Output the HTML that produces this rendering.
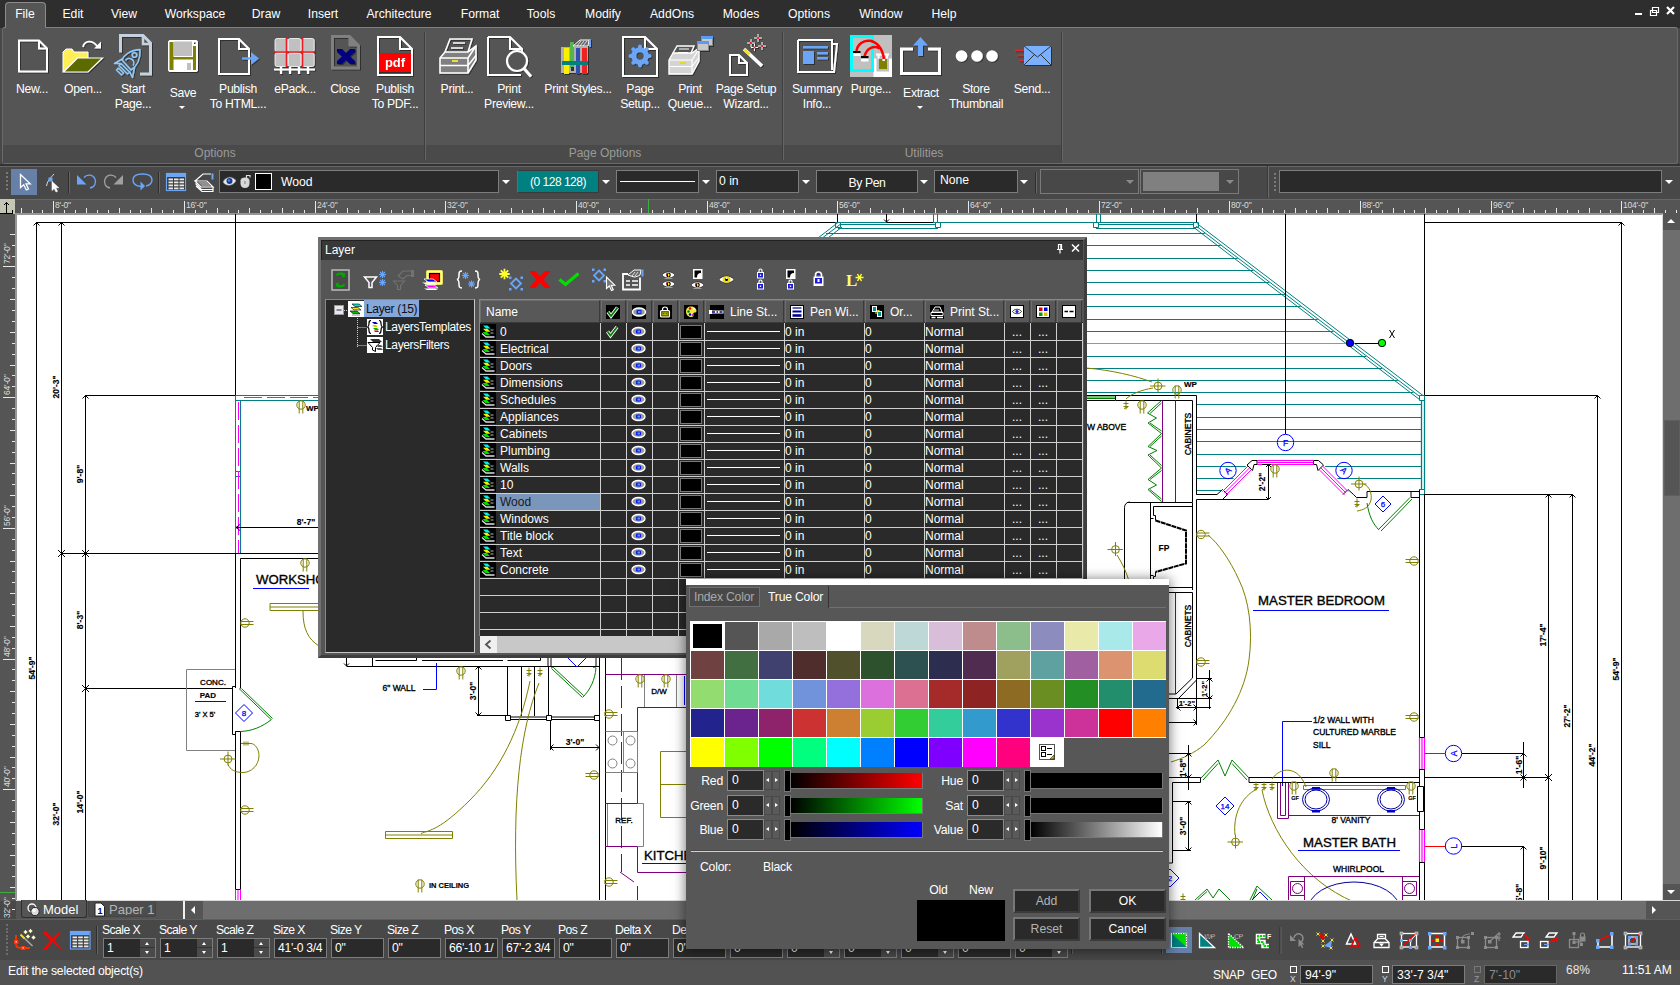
<!DOCTYPE html>
<html lang="en">
<head>
<meta charset="utf-8">
<title>TurboCAD - Layer</title>
<style>
*{box-sizing:border-box;margin:0;padding:0}
html,body{width:1680px;height:985px;overflow:hidden;background:#484848;}
body{font-family:"Liberation Sans",sans-serif;font-size:12px;color:#fff;position:relative;}
.abs{position:absolute}
.t{position:absolute;white-space:nowrap;line-height:14px;}
.c{transform:translateX(-50%);text-align:center}
svg{position:absolute;overflow:visible}
/* menu */
#menubar{position:absolute;left:0;top:0;width:1680px;height:28px;background:#2e2e2e}
#menubar .t{top:7px;font-size:12.2px;color:#fff}
#filetab{position:absolute;left:5px;top:2px;width:41px;height:27px;background:#555;border:1px solid #8c8c8c;border-bottom:none;border-radius:4px 4px 0 0}
/* ribbon */
#ribbon{position:absolute;left:2px;top:27px;width:1676px;height:137px;background:#555;border:1px solid #6a6a6a;border-top-color:#808080;border-radius:3px}
#ribfoot{position:absolute;left:3px;top:145px;width:1059px;height:18px;background:#4a4a4a}
.rl{position:absolute;white-space:nowrap;letter-spacing:-.3px;font-size:12.2px;line-height:15px;color:#fff;text-align:center;transform:translateX(-50%)}
.gl{position:absolute;white-space:nowrap;font-size:12px;line-height:14px;color:#9a9a9a;transform:translateX(-50%);top:146px}
.rsep{position:absolute;top:32px;width:2px;height:128px;background:#3e3e3e;border-right:1px solid #666}
/* toolbar */
#tb{position:absolute;left:0;top:166px;width:1680px;height:32px;background:#484848;border-top:1px solid #666}
.cb{position:absolute;top:170px;height:23px;background:#2a2a2a;border:1px solid #7d7d7d}
.arr{position:absolute;width:0;height:0;border-left:4px solid transparent;border-right:4px solid transparent;border-top:4px solid #fff}
/* ruler */
#hruler{position:absolute;left:0;top:199px;width:1680px;height:15px;background:#555;border-top:1px solid #676767}
#vruler{position:absolute;left:0;top:199px;width:16px;height:702px;background:#555}
#canvas{position:absolute;left:17px;top:215px;width:1646px;height:685px;background:#fff;overflow:hidden}
</style>
</head>
<body>
<!-- ===== MENU BAR ===== -->
<div id="menubar">
<div id="filetab"></div>
<div class="t c" style="left:25px">File</div>
<div class="t c" style="left:73px">Edit</div>
<div class="t c" style="left:124px">View</div>
<div class="t c" style="left:195px">Workspace</div>
<div class="t c" style="left:266px">Draw</div>
<div class="t c" style="left:323px">Insert</div>
<div class="t c" style="left:399px">Architecture</div>
<div class="t c" style="left:480px">Format</div>
<div class="t c" style="left:541px">Tools</div>
<div class="t c" style="left:603px">Modify</div>
<div class="t c" style="left:672px">AddOns</div>
<div class="t c" style="left:741px">Modes</div>
<div class="t c" style="left:809px">Options</div>
<div class="t c" style="left:881px">Window</div>
<div class="t c" style="left:944px">Help</div>
<svg style="left:1630px;top:4px" width="50" height="16" viewBox="0 0 50 16">
<rect x="5" y="9" width="7" height="2" fill="#fff"/>
<path d="M22.5 3.5h6v5h-6z M20.500 6.500h6v5h-6z" fill="#2d2d2d" stroke="#fff" stroke-width="1.2"/>
<path d="M37 3l7 7M44 3l-7 7" stroke="#fff" stroke-width="2.2"/>
</svg>
</div>
<!-- ===== RIBBON ===== -->
<div id="ribbon"></div>
<div id="ribfoot"></div>
<div class="abs" style="left:6px;top:27px;width:39px;height:3px;background:#555"></div>
<div class="rsep" style="left:424px"></div>
<div class="rsep" style="left:782px"></div>
<div class="rsep" style="left:1061px"></div>
<div class="gl" style="left:215px">Options</div>
<div class="gl" style="left:605px">Page Options</div>
<div class="gl" style="left:924px">Utilities</div>
<div class="rl" style="left:32px;top:82px">New...</div>
<div class="rl" style="left:83px;top:82px">Open...</div>
<div class="rl" style="left:133px;top:82px">Start<br>Page...</div>
<div class="rl" style="left:183px;top:86px">Save</div>
<div class="arr" style="left:179px;top:106px;border-width:3px 3px 0 3px"></div>
<div class="rl" style="left:238px;top:82px">Publish<br>To HTML...</div>
<div class="rl" style="left:295px;top:82px">ePack...</div>
<div class="rl" style="left:345px;top:82px">Close</div>
<div class="rl" style="left:395px;top:82px">Publish<br>To PDF...</div>
<div class="rl" style="left:457px;top:82px">Print...</div>
<div class="rl" style="left:509px;top:82px">Print<br>Preview...</div>
<div class="rl" style="left:578px;top:82px">Print Styles...</div>
<div class="rl" style="left:640px;top:82px">Page<br>Setup...</div>
<div class="rl" style="left:690px;top:82px">Print<br>Queue...</div>
<div class="rl" style="left:746px;top:82px">Page Setup<br>Wizard...</div>
<div class="rl" style="left:817px;top:82px">Summary<br>Info...</div>
<div class="rl" style="left:871px;top:82px">Purge...</div>
<div class="rl" style="left:921px;top:86px">Extract</div>
<div class="arr" style="left:917px;top:106px;border-width:3px 3px 0 3px"></div>
<div class="rl" style="left:976px;top:82px">Store<br>Thumbnail</div>
<div class="rl" style="left:1032px;top:82px">Send...</div>
<!--RIB_START-->
<svg style="left:0;top:0" width="1680" height="165" viewBox="0 0 1680 165" fill="none" stroke-linejoin="miter">
<defs><filter id="sh" x="-10%" y="-10%" width="130%" height="130%"><feDropShadow dx="1" dy="1" stdDeviation=".6" flood-color="#000" flood-opacity=".45"/></filter></defs>
<g filter="url(#sh)">
<path d="M19 40.500h20l8 8v23h-28z" stroke="#fff" stroke-width="2"/><path d="M39 40.500v8h8" stroke="#fff" stroke-width="2"/>
<path d="M63 72v-20l3-3h6l2 3h14v6h-11z" fill="#ffee58" stroke="#fff" stroke-width="1"/>
<path d="M63.500 72l14-14h25l-14.500 14z" fill="#5d6b00" stroke="#fff" stroke-width="1.200"/>
<path d="M83 47c1-6 9-8 14-1" stroke="#fff" stroke-width="1.800"/><path d="M94 48.500l7 0l0-7z" fill="#fff"/>
<path d="M120.500 52.500v-17h22.500l7.500 7.500v31h-10.500" stroke="#c4d2e0" stroke-width="3"/><path d="M143 36v8h8" stroke="#c4d2e0" stroke-width="2.500"/>
<g stroke="#90c8f8" stroke-width="1.600" stroke-linejoin="round"><path d="M140 49.600C130 50 124 55 122 60L131 70C136.500 66.500 140.500 60 140 49.600z"/><circle cx="134.500" cy="55" r="2.300"/><path d="M125.500 60.500a4.500 4.500 0 0 1 7.500 5"/><path d="M123 58.500L114.500 63.500L120.500 63.500"/><path d="M134.500 67.500L132.500 77.500L129.500 71.500"/><path d="M121 63.500l8.500 8.500l-2 2l-8.500-8.500zM118.500 68l5 5l-2 2l-5-5z"/></g>
<rect x="168.500" y="40.500" width="29" height="31" rx="1.500" fill="#fff" stroke="#fff"/><rect x="169.500" y="42" width="4" height="28" fill="#808000"/><rect x="193" y="46" width="3" height="24" fill="#808000"/><rect x="174" y="41.500" width="18" height="14.500" fill="#c0c0c0"/><rect x="173" y="57" width="20" height="2.500" fill="#808000"/><rect x="187" y="63" width="4" height="7" fill="#c0c0c0"/><rect x="194" y="42.500" width="1.500" height="1.500" fill="#333"/>
<path d="M219 39h20l10 10v25h-30z" stroke="#fff" stroke-width="2"/><path d="M239 39v10h10" stroke="#fff" stroke-width="2"/><path d="M242 58.500h9" stroke="#6aa5f8" stroke-width="2.400"/><path d="M251 52l8 6.500l-8 6.500z" fill="#6aa5f8"/>
<rect x="275.0" y="38.5" width="12.600" height="13.500" rx="2" fill="#c0c0c0" stroke="#fff" stroke-width=".8"/>
<rect x="288.3" y="38.5" width="12.600" height="13.500" rx="2" fill="#c0c0c0" stroke="#fff" stroke-width=".8"/>
<rect x="301.6" y="38.5" width="12.600" height="13.500" rx="2" fill="#c0c0c0" stroke="#fff" stroke-width=".8"/>
<rect x="275.0" y="53.0" width="12.600" height="13.500" rx="2" fill="#c0c0c0" stroke="#fff" stroke-width=".8"/>
<rect x="288.3" y="53.0" width="12.600" height="13.500" rx="2" fill="#c0c0c0" stroke="#fff" stroke-width=".8"/>
<rect x="301.6" y="53.0" width="12.600" height="13.500" rx="2" fill="#c0c0c0" stroke="#fff" stroke-width=".8"/>
<path d="M274 52h41M286.500 38v29M302.500 38v29" stroke="#ee1c24" stroke-width="1.600"/>
<path d="M274 69.500h41M281 67v7M290 67v7M299 67v7M308 67v7" stroke="#fff" stroke-width="2.200"/>
<path d="M332.500 36.500h17l9 9v22.500h-26z" stroke="#808080" stroke-width="3"/><path d="M349 36v10h10" fill="#808080" stroke="#808080"/>
<path d="M337 49h5l4 4l4-4h5v3l-5 4.500l5 4.500v3h-5l-4-4l-4 4h-5v-3l5-4.500l-5-4.500z" fill="#000080"/>
<path d="M378 37h22l12 12v26h-34z" stroke="#fff" stroke-width="2"/><path d="M400 37v12h12" stroke="#fff" stroke-width="2"/><rect x="379" y="53" width="32" height="19" fill="#ff0000"/>
<text x="395" y="67" font-family="Liberation Sans,sans-serif" font-weight="bold" font-size="13" fill="#fff" stroke="none" text-anchor="middle">pdf</text>
<path d="M445 52l5-13h22l-4 13" stroke="#fff" stroke-width="1.600"/><path d="M453 43h12M451 48h12" stroke="#fff" stroke-width="1.600"/>
<path d="M440 58l5-6h23l8-6v14l-8 13h-28z" fill="#808080" stroke="#fff" stroke-width="1.600"/><path d="M440 58h28v15M468 58l8-12M440 65.500h28l8-10" stroke="#fff" stroke-width="1.600"/><rect x="452" y="60" width="6" height="2" fill="#f0e020"/>
<path d="M488 37h22l12 12v4M510 37v12h12M488 37v38h33" stroke="#fff" stroke-width="2"/><circle cx="517" cy="61" r="10" stroke="#fff" stroke-width="2.200" fill="#555"/><path d="M524 68.500l7 8" stroke="#fff" stroke-width="3"/>
<rect x="561" y="47" width="27" height="26" fill="#b0b0b0"/><rect x="564" y="48" width="5" height="26" fill="#ffee00"/><rect x="570" y="42" width="4" height="26" fill="#50b848"/><rect x="576" y="48" width="4" height="26" fill="#3050b0"/><rect x="582" y="48" width="5" height="26" fill="#ee2020"/><rect x="562" y="61" width="26" height="4" fill="#008080"/><rect x="571" y="67" width="3" height="4" fill="#333"/>
<path d="M573 46l7-6h9l-1 6z" fill="#666" stroke="#fff" stroke-width="1"/><path d="M577 46l4-5M580 46l4-5M583 46l4-5" stroke="#fff" stroke-width=".8"/><rect x="589" y="39" width="2" height="8" fill="#6aa5f8"/>
<path d="M623 37h22l12 12v27h-34z" stroke="#fff" stroke-width="2"/><path d="M645 37v12h12" stroke="#fff" stroke-width="2"/><circle cx="640" cy="56" r="6.2" stroke="#6aa5f8" stroke-width="5.0"/><circle cx="649.5" cy="56.0" r="2.0" fill="#6aa5f8"/><path d="M648.0 56.0L649.5 56.0" stroke="#6aa5f8" stroke-width="4.0"/><circle cx="646.7" cy="62.7" r="2.0" fill="#6aa5f8"/><path d="M645.7 61.7L646.7 62.7" stroke="#6aa5f8" stroke-width="4.0"/><circle cx="640.0" cy="65.5" r="2.0" fill="#6aa5f8"/><path d="M640.0 64.0L640.0 65.5" stroke="#6aa5f8" stroke-width="4.0"/><circle cx="633.3" cy="62.7" r="2.0" fill="#6aa5f8"/><path d="M634.3 61.7L633.3 62.7" stroke="#6aa5f8" stroke-width="4.0"/><circle cx="630.5" cy="56.0" r="2.0" fill="#6aa5f8"/><path d="M632.0 56.0L630.5 56.0" stroke="#6aa5f8" stroke-width="4.0"/><circle cx="633.3" cy="49.3" r="2.0" fill="#6aa5f8"/><path d="M634.3 50.3L633.3 49.3" stroke="#6aa5f8" stroke-width="4.0"/><circle cx="640.0" cy="46.5" r="2.0" fill="#6aa5f8"/><path d="M640.0 48.0L640.0 46.5" stroke="#6aa5f8" stroke-width="4.0"/><circle cx="646.7" cy="49.3" r="2.0" fill="#6aa5f8"/><path d="M645.7 50.3L646.7 49.3" stroke="#6aa5f8" stroke-width="4.0"/>
<path d="M673 53l4-7h17l-3 7" stroke="#fff" stroke-width="1.400" fill="#555"/><path d="M679 49h10M678 52.500h10" stroke="#fff" stroke-width="1.200"/>
<path d="M669 60l4-7h19l7-5v13l-7 13h-23z" fill="#d4d4d4" stroke="#fff" stroke-width="1.400"/><path d="M669 60h23v14M692 60l7-11M669 66.500h23l7-9" stroke="#fff" stroke-width="1.200"/><rect x="680" y="62" width="6" height="2" fill="#e8d820"/>
<rect x="701.500" y="36.500" width="11" height="9" fill="#c8c8c8" stroke="#888"/><rect x="701" y="36" width="12" height="3" fill="#5a9af0"/><rect x="697.500" y="41.500" width="11" height="9" fill="#c8c8c8" stroke="#888"/><rect x="697" y="41" width="12" height="3" fill="#5a9af0"/>
<path d="M730 55h9l8 8v12h-17z" stroke="#fff" stroke-width="2"/><path d="M739 55v8h8" stroke="#fff" stroke-width="2"/>
<path d="M744 49l18 17" stroke="#fff" stroke-width="3.500"/><path d="M744.500 49.500l5 4.800" stroke="#f0e020" stroke-width="2.500"/>
<g stroke="#fff" stroke-width="1"><path d="M747 43h8M751 39v8M754 38h8M758 34v8M751 47.500h7M754.500 44v7M758 46h8M762 42v8"/></g><g fill="#ff2020"><rect x="750" y="42" width="2" height="2"/><rect x="757" y="37" width="2" height="2"/><rect x="753.500" y="46.500" width="2" height="2"/><rect x="761" y="45" width="2" height="2"/></g>
<path d="M798 40h34v30M832 44h5l-3 28h-36v-32" stroke="#fff" stroke-width="2"/><rect x="803" y="46" width="25" height="2.500" fill="#6aa5f8"/><rect x="803" y="51" width="11" height="13" fill="#6aa5f8"/><rect x="817" y="52" width="11" height="2.500" fill="#6aa5f8"/><rect x="817" y="57" width="11" height="2.500" fill="#6aa5f8"/>
</g>
<rect x="850" y="35" width="42" height="42" fill="#c0c0c0"/><rect x="873.500" y="58.500" width="18.500" height="18.500" fill="#fff"/><rect x="851.500" y="36.500" width="21" height="34" stroke="#00ffff" stroke-width="3"/>
<rect x="876.500" y="55" width="12.500" height="16.500" fill="#c0c0c0"/><path d="M876 54.500h13M878.500 55v3.500M887 55v3.500" stroke="#fff" stroke-width="2"/><rect x="879" y="59" width="8" height="10" fill="#808000"/>
<path d="M856.500 51c2-14 24-16 27.500 8M864.500 56.500c2-9 10-11.500 15-8" stroke="#ff0000" stroke-width="2.500"/><rect x="882.500" y="59" width="2.500" height="2" fill="#fff"/>
<rect x="853" y="51" width="7.500" height="2" fill="#000"/><rect x="853" y="53.500" width="7.500" height="2.500" fill="#fff"/><rect x="861" y="56" width="7.500" height="2" fill="#000"/><rect x="861" y="59" width="7.500" height="2.500" fill="#fff"/>
<g filter="url(#sh)">
<path d="M913 49h-11.500v24.500h38v-24.500h-11.500" stroke="#fff" stroke-width="3"/><path d="M920.500 56v-12" stroke="#6aa5f8" stroke-width="5"/><path d="M913 45.500l7.500-8.500l7.500 8.500z" fill="#6aa5f8"/>
<circle cx="961.500" cy="56" r="5.800" fill="#fff"/><circle cx="977" cy="56" r="5.800" fill="#fff"/><circle cx="992" cy="56" r="5.800" fill="#fff"/>
<rect x="1024" y="46" width="27" height="19" fill="#7ab0ff"/><path d="M1024 46l13.500 11l13.500-11M1024 65l10-10M1051 65l-10-10" stroke="#333" stroke-width="1"/><path d="M1015 50.500h9M1017 55.500h7M1019 60.500h5" stroke="#ee2020" stroke-width="1.600"/>
</g>
</svg>
<!--RIB_END-->
<!-- ===== TOOLBAR ===== -->
<div id="tb"></div>
<div class="abs" style="left:0;top:164px;width:1680px;height:2px;background:#333"></div>
<div class="abs" style="left:11px;top:169px;width:26px;height:26px;background:#6680a8"></div>
<div class="abs" style="left:68px;top:172px;width:2px;height:21px;background:#2e2e2e;border-right:1px solid #666"></div>
<div class="abs" style="left:158px;top:172px;width:2px;height:21px;background:#2e2e2e;border-right:1px solid #666"></div>
<div class="cb" style="left:219px;width:280px"></div>
<div class="abs" style="left:255px;top:173px;width:17px;height:17px;background:#000;border:1px solid #fff"></div>
<div class="t" style="left:281px;top:175px;font-size:12.2px">Wood</div>
<div class="arr" style="left:502px;top:180px"></div>
<div class="cb" style="left:517px;width:82px;background:#008080;border-color:#3a3a3a #3a3a3a #3a3a3a #6a6a6a"></div>
<div class="t c" style="left:558px;top:175px;font-size:12px;letter-spacing:-.5px">(0 128 128)</div>
<div class="arr" style="left:602px;top:180px"></div>
<div class="cb" style="left:616px;width:83px"></div>
<div class="abs" style="left:620px;top:181px;width:75px;height:1px;background:#fff"></div>
<div class="arr" style="left:702px;top:180px"></div>
<div class="cb" style="left:716px;width:83px"></div>
<div class="t" style="left:719px;top:174px;font-size:12.2px">0 in</div>
<div class="arr" style="left:802px;top:180px"></div>
<div class="cb" style="left:816px;width:102px"></div>
<div class="t c" style="left:867px;top:176px;font-size:12.2px;letter-spacing:-.4px">By Pen</div>
<div class="arr" style="left:920px;top:180px"></div>
<div class="cb" style="left:934px;width:84px"></div>
<div class="t" style="left:940px;top:173px;font-size:12.2px">None</div>
<div class="arr" style="left:1020px;top:180px"></div>
<div class="abs" style="left:1035px;top:172px;width:2px;height:21px;background:#2e2e2e;border-right:1px solid #666"></div>
<div class="cb" style="left:1040px;top:169px;height:25px;width:99px;background:#484848;border-color:#7a7a7a"></div>
<div class="arr" style="left:1126px;top:180px;border-top-color:#8a8a8a"></div>
<div class="cb" style="left:1140px;top:169px;height:25px;width:99px;background:#484848;border-color:#7a7a7a"></div>
<div class="abs" style="left:1143px;top:172px;width:76px;height:19px;background:#808080"></div>
<div class="arr" style="left:1226px;top:180px;border-top-color:#8a8a8a"></div>
<div class="abs" style="left:1267px;top:166px;width:2px;height:32px;background:#3a3a3a;border-right:1px solid #6a6a6a"></div>
<div class="abs" style="left:1274px;top:173px;width:2px;height:2px;background:#7a7a7a"></div><div class="abs" style="left:1274px;top:177px;width:2px;height:2px;background:#7a7a7a"></div><div class="abs" style="left:1274px;top:181px;width:2px;height:2px;background:#7a7a7a"></div><div class="abs" style="left:1274px;top:185px;width:2px;height:2px;background:#7a7a7a"></div><div class="abs" style="left:1274px;top:189px;width:2px;height:2px;background:#7a7a7a"></div>
<div class="cb" style="left:1279px;width:383px"></div>
<div class="arr" style="left:1665px;top:180px"></div>
<!--TBI_START-->
<svg style="left:0;top:164px" width="300" height="36" viewBox="0 164 300 36" fill="none">
<rect x="6" y="172" width="2" height="2" fill="#7a7a7a"/>
<rect x="6" y="176" width="2" height="2" fill="#7a7a7a"/>
<rect x="6" y="180" width="2" height="2" fill="#7a7a7a"/>
<rect x="6" y="184" width="2" height="2" fill="#7a7a7a"/>
<rect x="6" y="188" width="2" height="2" fill="#7a7a7a"/>
<path d="M20.500 174.500v13l3.200-2.800l2.600 5.300l2.200-1l-2.500-5.200h4.200z" fill="#6680a8" stroke="#fff" stroke-width="1.300" stroke-linejoin="miter"/>
<path d="M46.500 186c1-6 5-9 7.500-12" stroke="#ddd" stroke-width="1"/><rect x="48.500" y="177.500" width="4" height="4" fill="#6aa5f8"/><path d="M52 181.500v9l2.200-2l1.800 3.500l1.500-.7l-1.700-3.500h3z" fill="#fff" stroke="#fff" stroke-width=".6"/>
<path d="M77 175v9.500h9.500z" fill="#6aa5f8"/><path d="M84 177.500a6.500 6.500 0 1 1 6 10.500" stroke="#6aa5f8" stroke-width="1.300"/>
<path d="M123 175v9.500h-9.500z" fill="#a0a0a0"/><path d="M116 177.500a6.500 6.500 0 1 0 -6 10.500" stroke="#a0a0a0" stroke-width="1.300"/>
<path d="M141 186.500c-5-.5-8-3-8-6.500c0-4 4-6 9.500-6s9.500 2 9.500 6c0 3-2 5-6 6" stroke="#6aa5f8" stroke-width="1.400"/><path d="M140.500 181.500l4.500 4.500l-4.500 4.500z" fill="#6aa5f8"/>
<rect x="166.500" y="173.500" width="19" height="17" fill="#3a3a3a" stroke="#6aa5f8" stroke-width="1.200"/><rect x="167" y="174" width="18" height="3" fill="#6aa5f8"/>
<rect x="168.5" y="178.5" width="4.500" height="1.800" fill="#e8e8e8"/>
<rect x="174.0" y="178.5" width="4.500" height="1.800" fill="#e8e8e8"/>
<rect x="179.5" y="178.5" width="4.500" height="1.800" fill="#e8e8e8"/>
<rect x="168.5" y="181.5" width="4.500" height="1.800" fill="#e8e8e8"/>
<rect x="174.0" y="181.5" width="4.500" height="1.800" fill="#e8e8e8"/>
<rect x="179.5" y="181.5" width="4.500" height="1.800" fill="#e8e8e8"/>
<rect x="168.5" y="184.5" width="4.500" height="1.800" fill="#e8e8e8"/>
<rect x="174.0" y="184.5" width="4.500" height="1.800" fill="#e8e8e8"/>
<rect x="179.5" y="184.5" width="4.500" height="1.800" fill="#e8e8e8"/>
<rect x="168.5" y="187.5" width="4.500" height="1.800" fill="#e8e8e8"/>
<rect x="174.0" y="187.5" width="4.500" height="1.800" fill="#e8e8e8"/>
<rect x="179.5" y="187.5" width="4.500" height="1.800" fill="#e8e8e8"/>
<path d="M195 181l8-7h8M195 181l6 6h12l-6-6zM195.500 183.500l6 6h12M196 186l6 5.500h11.500M213 187v4" stroke="#fff" stroke-width="1.200"/><path d="M197 181h9l5 5h-9z" fill="#909090"/><rect x="211.500" y="173.500" width="2" height="6" fill="#6aa5f8"/>
</svg>
<svg style="left:220px;top:171px" width="36" height="21" viewBox="220 171 36 21" fill="none"><path d="M223 182c3-6 10-6 13-1c-3 5-10 6-13 1z" fill="#e8e8e8" stroke="#888" stroke-width=".6"/><circle cx="229.500" cy="181" r="3" fill="#1a3a9a"/><circle cx="229" cy="180.500" r="1.200" fill="#4a80e0"/><path d="M223 180c3-4 9-5 13-1" stroke="#333" stroke-width="1"/><path d="M246.500 179v-3.500h3.500v2" stroke="#ddd" stroke-width="1.200"/><path d="M240.500 180.500c0-2 2-3 4.500-3s4.500 1 4.500 3v3c0 3-2 4.500-4.500 4.500s-4.500-1.500-4.500-4.500z" fill="#d8d8d8"/><rect x="244" y="181" width="2" height="3" fill="#aaa"/></svg>
<!--TBI_END-->
<!-- ===== RULERS ===== -->
<div id="hruler"></div>
<div id="vruler"></div>
<!--RULERS-->
<svg style="left:0;top:0" width="1680" height="985" viewBox="0 0 1680 985" shape-rendering="crispEdges">
<rect x="0" y="199" width="15" height="15" fill="#c6c6b4"/>
<path d="M6.500 202v11M3.500 205.500l3-3l3 3M0 213.500h12" stroke="#000" stroke-width="1" fill="none"/>
<path d="M12.500 210v4" stroke="#000" stroke-width="1" fill="none"/>
<rect x="15" y="213" width="1648" height="2" fill="#959595"/>
<rect x="15" y="213" width="2" height="687" fill="#959595"/>
<rect x="21" y="208" width="1" height="5" fill="#e8e8e8"/>
<rect x="32" y="210" width="1" height="3" fill="#e8e8e8"/>
<rect x="42" y="210" width="1" height="3" fill="#e8e8e8"/>
<rect x="53" y="201" width="1" height="12" fill="#e8e8e8"/>
<rect x="64" y="210" width="1" height="3" fill="#e8e8e8"/>
<rect x="75" y="210" width="1" height="3" fill="#e8e8e8"/>
<rect x="86" y="208" width="1" height="5" fill="#e8e8e8"/>
<rect x="97" y="210" width="1" height="3" fill="#e8e8e8"/>
<rect x="108" y="210" width="1" height="3" fill="#e8e8e8"/>
<rect x="119" y="208" width="1" height="5" fill="#e8e8e8"/>
<rect x="130" y="210" width="1" height="3" fill="#e8e8e8"/>
<rect x="140" y="210" width="1" height="3" fill="#e8e8e8"/>
<rect x="151" y="208" width="1" height="5" fill="#e8e8e8"/>
<rect x="162" y="210" width="1" height="3" fill="#e8e8e8"/>
<rect x="173" y="210" width="1" height="3" fill="#e8e8e8"/>
<rect x="184" y="201" width="1" height="12" fill="#e8e8e8"/>
<rect x="195" y="210" width="1" height="3" fill="#e8e8e8"/>
<rect x="206" y="210" width="1" height="3" fill="#e8e8e8"/>
<rect x="217" y="208" width="1" height="5" fill="#e8e8e8"/>
<rect x="228" y="210" width="1" height="3" fill="#e8e8e8"/>
<rect x="238" y="210" width="1" height="3" fill="#e8e8e8"/>
<rect x="249" y="208" width="1" height="5" fill="#e8e8e8"/>
<rect x="260" y="210" width="1" height="3" fill="#e8e8e8"/>
<rect x="271" y="210" width="1" height="3" fill="#e8e8e8"/>
<rect x="282" y="208" width="1" height="5" fill="#e8e8e8"/>
<rect x="293" y="210" width="1" height="3" fill="#e8e8e8"/>
<rect x="304" y="210" width="1" height="3" fill="#e8e8e8"/>
<rect x="315" y="201" width="1" height="12" fill="#e8e8e8"/>
<rect x="326" y="210" width="1" height="3" fill="#e8e8e8"/>
<rect x="336" y="210" width="1" height="3" fill="#e8e8e8"/>
<rect x="347" y="208" width="1" height="5" fill="#e8e8e8"/>
<rect x="358" y="210" width="1" height="3" fill="#e8e8e8"/>
<rect x="369" y="210" width="1" height="3" fill="#e8e8e8"/>
<rect x="380" y="208" width="1" height="5" fill="#e8e8e8"/>
<rect x="391" y="210" width="1" height="3" fill="#e8e8e8"/>
<rect x="402" y="210" width="1" height="3" fill="#e8e8e8"/>
<rect x="413" y="208" width="1" height="5" fill="#e8e8e8"/>
<rect x="424" y="210" width="1" height="3" fill="#e8e8e8"/>
<rect x="434" y="210" width="1" height="3" fill="#e8e8e8"/>
<rect x="445" y="201" width="1" height="12" fill="#e8e8e8"/>
<rect x="456" y="210" width="1" height="3" fill="#e8e8e8"/>
<rect x="467" y="210" width="1" height="3" fill="#e8e8e8"/>
<rect x="478" y="208" width="1" height="5" fill="#e8e8e8"/>
<rect x="489" y="210" width="1" height="3" fill="#e8e8e8"/>
<rect x="500" y="210" width="1" height="3" fill="#e8e8e8"/>
<rect x="511" y="208" width="1" height="5" fill="#e8e8e8"/>
<rect x="522" y="210" width="1" height="3" fill="#e8e8e8"/>
<rect x="532" y="210" width="1" height="3" fill="#e8e8e8"/>
<rect x="543" y="208" width="1" height="5" fill="#e8e8e8"/>
<rect x="554" y="210" width="1" height="3" fill="#e8e8e8"/>
<rect x="565" y="210" width="1" height="3" fill="#e8e8e8"/>
<rect x="576" y="201" width="1" height="12" fill="#e8e8e8"/>
<rect x="587" y="210" width="1" height="3" fill="#e8e8e8"/>
<rect x="598" y="210" width="1" height="3" fill="#e8e8e8"/>
<rect x="609" y="208" width="1" height="5" fill="#e8e8e8"/>
<rect x="620" y="210" width="1" height="3" fill="#e8e8e8"/>
<rect x="630" y="210" width="1" height="3" fill="#e8e8e8"/>
<rect x="641" y="208" width="1" height="5" fill="#e8e8e8"/>
<rect x="652" y="210" width="1" height="3" fill="#e8e8e8"/>
<rect x="663" y="210" width="1" height="3" fill="#e8e8e8"/>
<rect x="674" y="208" width="1" height="5" fill="#e8e8e8"/>
<rect x="685" y="210" width="1" height="3" fill="#e8e8e8"/>
<rect x="696" y="210" width="1" height="3" fill="#e8e8e8"/>
<rect x="707" y="201" width="1" height="12" fill="#e8e8e8"/>
<rect x="718" y="210" width="1" height="3" fill="#e8e8e8"/>
<rect x="728" y="210" width="1" height="3" fill="#e8e8e8"/>
<rect x="739" y="208" width="1" height="5" fill="#e8e8e8"/>
<rect x="750" y="210" width="1" height="3" fill="#e8e8e8"/>
<rect x="761" y="210" width="1" height="3" fill="#e8e8e8"/>
<rect x="772" y="208" width="1" height="5" fill="#e8e8e8"/>
<rect x="783" y="210" width="1" height="3" fill="#e8e8e8"/>
<rect x="794" y="210" width="1" height="3" fill="#e8e8e8"/>
<rect x="805" y="208" width="1" height="5" fill="#e8e8e8"/>
<rect x="816" y="210" width="1" height="3" fill="#e8e8e8"/>
<rect x="826" y="210" width="1" height="3" fill="#e8e8e8"/>
<rect x="837" y="201" width="1" height="12" fill="#e8e8e8"/>
<rect x="848" y="210" width="1" height="3" fill="#e8e8e8"/>
<rect x="859" y="210" width="1" height="3" fill="#e8e8e8"/>
<rect x="870" y="208" width="1" height="5" fill="#e8e8e8"/>
<rect x="881" y="210" width="1" height="3" fill="#e8e8e8"/>
<rect x="892" y="210" width="1" height="3" fill="#e8e8e8"/>
<rect x="903" y="208" width="1" height="5" fill="#e8e8e8"/>
<rect x="914" y="210" width="1" height="3" fill="#e8e8e8"/>
<rect x="924" y="210" width="1" height="3" fill="#e8e8e8"/>
<rect x="935" y="208" width="1" height="5" fill="#e8e8e8"/>
<rect x="946" y="210" width="1" height="3" fill="#e8e8e8"/>
<rect x="957" y="210" width="1" height="3" fill="#e8e8e8"/>
<rect x="968" y="201" width="1" height="12" fill="#e8e8e8"/>
<rect x="979" y="210" width="1" height="3" fill="#e8e8e8"/>
<rect x="990" y="210" width="1" height="3" fill="#e8e8e8"/>
<rect x="1001" y="208" width="1" height="5" fill="#e8e8e8"/>
<rect x="1012" y="210" width="1" height="3" fill="#e8e8e8"/>
<rect x="1022" y="210" width="1" height="3" fill="#e8e8e8"/>
<rect x="1033" y="208" width="1" height="5" fill="#e8e8e8"/>
<rect x="1044" y="210" width="1" height="3" fill="#e8e8e8"/>
<rect x="1055" y="210" width="1" height="3" fill="#e8e8e8"/>
<rect x="1066" y="208" width="1" height="5" fill="#e8e8e8"/>
<rect x="1077" y="210" width="1" height="3" fill="#e8e8e8"/>
<rect x="1088" y="210" width="1" height="3" fill="#e8e8e8"/>
<rect x="1099" y="201" width="1" height="12" fill="#e8e8e8"/>
<rect x="1110" y="210" width="1" height="3" fill="#e8e8e8"/>
<rect x="1120" y="210" width="1" height="3" fill="#e8e8e8"/>
<rect x="1131" y="208" width="1" height="5" fill="#e8e8e8"/>
<rect x="1142" y="210" width="1" height="3" fill="#e8e8e8"/>
<rect x="1153" y="210" width="1" height="3" fill="#e8e8e8"/>
<rect x="1164" y="208" width="1" height="5" fill="#e8e8e8"/>
<rect x="1175" y="210" width="1" height="3" fill="#e8e8e8"/>
<rect x="1186" y="210" width="1" height="3" fill="#e8e8e8"/>
<rect x="1197" y="208" width="1" height="5" fill="#e8e8e8"/>
<rect x="1208" y="210" width="1" height="3" fill="#e8e8e8"/>
<rect x="1218" y="210" width="1" height="3" fill="#e8e8e8"/>
<rect x="1229" y="201" width="1" height="12" fill="#e8e8e8"/>
<rect x="1240" y="210" width="1" height="3" fill="#e8e8e8"/>
<rect x="1251" y="210" width="1" height="3" fill="#e8e8e8"/>
<rect x="1262" y="208" width="1" height="5" fill="#e8e8e8"/>
<rect x="1273" y="210" width="1" height="3" fill="#e8e8e8"/>
<rect x="1284" y="210" width="1" height="3" fill="#e8e8e8"/>
<rect x="1295" y="208" width="1" height="5" fill="#e8e8e8"/>
<rect x="1306" y="210" width="1" height="3" fill="#e8e8e8"/>
<rect x="1316" y="210" width="1" height="3" fill="#e8e8e8"/>
<rect x="1327" y="208" width="1" height="5" fill="#e8e8e8"/>
<rect x="1338" y="210" width="1" height="3" fill="#e8e8e8"/>
<rect x="1349" y="210" width="1" height="3" fill="#e8e8e8"/>
<rect x="1360" y="201" width="1" height="12" fill="#e8e8e8"/>
<rect x="1371" y="210" width="1" height="3" fill="#e8e8e8"/>
<rect x="1382" y="210" width="1" height="3" fill="#e8e8e8"/>
<rect x="1393" y="208" width="1" height="5" fill="#e8e8e8"/>
<rect x="1404" y="210" width="1" height="3" fill="#e8e8e8"/>
<rect x="1414" y="210" width="1" height="3" fill="#e8e8e8"/>
<rect x="1425" y="208" width="1" height="5" fill="#e8e8e8"/>
<rect x="1436" y="210" width="1" height="3" fill="#e8e8e8"/>
<rect x="1447" y="210" width="1" height="3" fill="#e8e8e8"/>
<rect x="1458" y="208" width="1" height="5" fill="#e8e8e8"/>
<rect x="1469" y="210" width="1" height="3" fill="#e8e8e8"/>
<rect x="1480" y="210" width="1" height="3" fill="#e8e8e8"/>
<rect x="1491" y="201" width="1" height="12" fill="#e8e8e8"/>
<rect x="1502" y="210" width="1" height="3" fill="#e8e8e8"/>
<rect x="1512" y="210" width="1" height="3" fill="#e8e8e8"/>
<rect x="1523" y="208" width="1" height="5" fill="#e8e8e8"/>
<rect x="1534" y="210" width="1" height="3" fill="#e8e8e8"/>
<rect x="1545" y="210" width="1" height="3" fill="#e8e8e8"/>
<rect x="1556" y="208" width="1" height="5" fill="#e8e8e8"/>
<rect x="1567" y="210" width="1" height="3" fill="#e8e8e8"/>
<rect x="1578" y="210" width="1" height="3" fill="#e8e8e8"/>
<rect x="1589" y="208" width="1" height="5" fill="#e8e8e8"/>
<rect x="1600" y="210" width="1" height="3" fill="#e8e8e8"/>
<rect x="1610" y="210" width="1" height="3" fill="#e8e8e8"/>
<rect x="1621" y="201" width="1" height="12" fill="#e8e8e8"/>
<rect x="1632" y="210" width="1" height="3" fill="#e8e8e8"/>
<rect x="1643" y="210" width="1" height="3" fill="#e8e8e8"/>
<rect x="1654" y="208" width="1" height="5" fill="#e8e8e8"/>
<rect x="1665" y="210" width="1" height="3" fill="#e8e8e8"/>
<rect x="1676" y="210" width="1" height="3" fill="#e8e8e8"/>
<rect x="10" y="234" width="5" height="1" fill="#e8e8e8"/>
<rect x="12" y="245" width="3" height="1" fill="#e8e8e8"/>
<rect x="12" y="256" width="3" height="1" fill="#e8e8e8"/>
<rect x="3" y="266" width="12" height="1" fill="#e8e8e8"/>
<rect x="12" y="277" width="3" height="1" fill="#e8e8e8"/>
<rect x="12" y="288" width="3" height="1" fill="#e8e8e8"/>
<rect x="10" y="299" width="5" height="1" fill="#e8e8e8"/>
<rect x="12" y="310" width="3" height="1" fill="#e8e8e8"/>
<rect x="12" y="321" width="3" height="1" fill="#e8e8e8"/>
<rect x="10" y="332" width="5" height="1" fill="#e8e8e8"/>
<rect x="12" y="343" width="3" height="1" fill="#e8e8e8"/>
<rect x="12" y="354" width="3" height="1" fill="#e8e8e8"/>
<rect x="10" y="365" width="5" height="1" fill="#e8e8e8"/>
<rect x="12" y="375" width="3" height="1" fill="#e8e8e8"/>
<rect x="12" y="386" width="3" height="1" fill="#e8e8e8"/>
<rect x="3" y="397" width="12" height="1" fill="#e8e8e8"/>
<rect x="12" y="408" width="3" height="1" fill="#e8e8e8"/>
<rect x="12" y="419" width="3" height="1" fill="#e8e8e8"/>
<rect x="10" y="430" width="5" height="1" fill="#e8e8e8"/>
<rect x="12" y="441" width="3" height="1" fill="#e8e8e8"/>
<rect x="12" y="452" width="3" height="1" fill="#e8e8e8"/>
<rect x="10" y="463" width="5" height="1" fill="#e8e8e8"/>
<rect x="12" y="473" width="3" height="1" fill="#e8e8e8"/>
<rect x="12" y="484" width="3" height="1" fill="#e8e8e8"/>
<rect x="10" y="495" width="5" height="1" fill="#e8e8e8"/>
<rect x="12" y="506" width="3" height="1" fill="#e8e8e8"/>
<rect x="12" y="517" width="3" height="1" fill="#e8e8e8"/>
<rect x="3" y="528" width="12" height="1" fill="#e8e8e8"/>
<rect x="12" y="539" width="3" height="1" fill="#e8e8e8"/>
<rect x="12" y="550" width="3" height="1" fill="#e8e8e8"/>
<rect x="10" y="561" width="5" height="1" fill="#e8e8e8"/>
<rect x="12" y="571" width="3" height="1" fill="#e8e8e8"/>
<rect x="12" y="582" width="3" height="1" fill="#e8e8e8"/>
<rect x="10" y="593" width="5" height="1" fill="#e8e8e8"/>
<rect x="12" y="604" width="3" height="1" fill="#e8e8e8"/>
<rect x="12" y="615" width="3" height="1" fill="#e8e8e8"/>
<rect x="10" y="626" width="5" height="1" fill="#e8e8e8"/>
<rect x="12" y="637" width="3" height="1" fill="#e8e8e8"/>
<rect x="12" y="648" width="3" height="1" fill="#e8e8e8"/>
<rect x="3" y="659" width="12" height="1" fill="#e8e8e8"/>
<rect x="12" y="669" width="3" height="1" fill="#e8e8e8"/>
<rect x="12" y="680" width="3" height="1" fill="#e8e8e8"/>
<rect x="10" y="691" width="5" height="1" fill="#e8e8e8"/>
<rect x="12" y="702" width="3" height="1" fill="#e8e8e8"/>
<rect x="12" y="713" width="3" height="1" fill="#e8e8e8"/>
<rect x="10" y="724" width="5" height="1" fill="#e8e8e8"/>
<rect x="12" y="735" width="3" height="1" fill="#e8e8e8"/>
<rect x="12" y="746" width="3" height="1" fill="#e8e8e8"/>
<rect x="10" y="757" width="5" height="1" fill="#e8e8e8"/>
<rect x="12" y="767" width="3" height="1" fill="#e8e8e8"/>
<rect x="12" y="778" width="3" height="1" fill="#e8e8e8"/>
<rect x="3" y="789" width="12" height="1" fill="#e8e8e8"/>
<rect x="12" y="800" width="3" height="1" fill="#e8e8e8"/>
<rect x="12" y="811" width="3" height="1" fill="#e8e8e8"/>
<rect x="10" y="822" width="5" height="1" fill="#e8e8e8"/>
<rect x="12" y="833" width="3" height="1" fill="#e8e8e8"/>
<rect x="12" y="844" width="3" height="1" fill="#e8e8e8"/>
<rect x="10" y="855" width="5" height="1" fill="#e8e8e8"/>
<rect x="12" y="865" width="3" height="1" fill="#e8e8e8"/>
<rect x="12" y="876" width="3" height="1" fill="#e8e8e8"/>
<rect x="10" y="887" width="5" height="1" fill="#e8e8e8"/>
<rect x="12" y="898" width="3" height="1" fill="#e8e8e8"/>
<rect x="12" y="909" width="3" height="1" fill="#e8e8e8"/>
<rect x="648" y="199" width="1" height="14" fill="#3fae3f"/>
<rect x="0" y="892" width="15" height="1" fill="#3fae3f"/>
</svg>
<div class="t" style="left:55px;top:200px;font-size:8.500px;line-height:11px;color:#dcdcdc;letter-spacing:-0.2px">8'-0"</div>
<div class="t" style="left:186px;top:200px;font-size:8.500px;line-height:11px;color:#dcdcdc;letter-spacing:-0.2px">16'-0"</div>
<div class="t" style="left:317px;top:200px;font-size:8.500px;line-height:11px;color:#dcdcdc;letter-spacing:-0.2px">24'-0"</div>
<div class="t" style="left:447px;top:200px;font-size:8.500px;line-height:11px;color:#dcdcdc;letter-spacing:-0.2px">32'-0"</div>
<div class="t" style="left:578px;top:200px;font-size:8.500px;line-height:11px;color:#dcdcdc;letter-spacing:-0.2px">40'-0"</div>
<div class="t" style="left:709px;top:200px;font-size:8.500px;line-height:11px;color:#dcdcdc;letter-spacing:-0.2px">48'-0"</div>
<div class="t" style="left:839px;top:200px;font-size:8.500px;line-height:11px;color:#dcdcdc;letter-spacing:-0.2px">56'-0"</div>
<div class="t" style="left:970px;top:200px;font-size:8.500px;line-height:11px;color:#dcdcdc;letter-spacing:-0.2px">64'-0"</div>
<div class="t" style="left:1101px;top:200px;font-size:8.500px;line-height:11px;color:#dcdcdc;letter-spacing:-0.2px">72'-0"</div>
<div class="t" style="left:1231px;top:200px;font-size:8.500px;line-height:11px;color:#dcdcdc;letter-spacing:-0.2px">80'-0"</div>
<div class="t" style="left:1362px;top:200px;font-size:8.500px;line-height:11px;color:#dcdcdc;letter-spacing:-0.2px">88'-0"</div>
<div class="t" style="left:1493px;top:200px;font-size:8.500px;line-height:11px;color:#dcdcdc;letter-spacing:-0.2px">96'-0"</div>
<div class="t" style="left:1623px;top:200px;font-size:8.500px;line-height:11px;color:#dcdcdc;letter-spacing:-0.2px">104'-0"</div>
<div class="t" style="left:2px;top:264px;font-size:8.500px;line-height:11px;color:#dcdcdc;letter-spacing:-0.2px;transform-origin:0 0;transform:rotate(-90deg)">72'-0"</div>
<div class="t" style="left:2px;top:395px;font-size:8.500px;line-height:11px;color:#dcdcdc;letter-spacing:-0.2px;transform-origin:0 0;transform:rotate(-90deg)">64'-0"</div>
<div class="t" style="left:2px;top:526px;font-size:8.500px;line-height:11px;color:#dcdcdc;letter-spacing:-0.2px;transform-origin:0 0;transform:rotate(-90deg)">56'-0"</div>
<div class="t" style="left:2px;top:657px;font-size:8.500px;line-height:11px;color:#dcdcdc;letter-spacing:-0.2px;transform-origin:0 0;transform:rotate(-90deg)">48'-0"</div>
<div class="t" style="left:2px;top:787px;font-size:8.500px;line-height:11px;color:#dcdcdc;letter-spacing:-0.2px;transform-origin:0 0;transform:rotate(-90deg)">40'-0"</div>
<div class="t" style="left:2px;top:918px;font-size:8.500px;line-height:11px;color:#dcdcdc;letter-spacing:-0.2px;transform-origin:0 0;transform:rotate(-90deg)">32'-0"</div>
<!-- ===== CANVAS ===== -->
<div id="canvas"></div>
<svg style="left:0;top:0" width="1680" height="985" viewBox="0 0 1680 985" fill="none" stroke-width="1" font-family="Liberation Sans,sans-serif">
<defs><clipPath id="cv"><rect x="16" y="214" width="1646" height="686"/></clipPath>
<g id="oh" stroke="#808000"><circle cx="0" cy="0" r="4.200"/><path d="M-4.500 -1.500h13M-4.500 1.500h13"/></g>
<g id="ov" stroke="#808000"><circle cx="0" cy="0" r="4.200"/><path d="M-1.800 -4.500v13M1.800 -4.500v13"/></g>
<g id="lt" stroke="#808000"><circle cx="0" cy="0" r="3.900"/><path d="M-8 0h15.500M0 -7.500v14"/></g>
<g id="sw" stroke="#808000"><path d="M0 -4.500v9M-2.500 -1.500h5M-2.500 1.500h5M-2 3.500l4-1.500"/></g>
</defs>
<g clip-path="url(#cv)">
<path d="M36.500 222.500H837.500M36.500 222V900M61.500 222V900M85.500 395.500H235M85.500 395V900M235.500 214V396" stroke="#000" />
<path d="M61.500 553.500H320M85.500 688.500H233" stroke="#000" />
<path d="M33.500 225.500l3-3l3 3M58.500 225.500l3-3l3 3M82.500 398.500l3-3l3 3" stroke="#000" />
<path d="M58 550l7 7M58 557l7-7M82 550l7 7M82 557l7-7M82 685l7 7M82 692l7-7" stroke="#000" />
<text x="59" y="387" font-size="8.5" fill="#000" stroke="#000" stroke-width="0.15" text-anchor="middle" font-weight="bold" transform="rotate(-90 59 387)">20'-3"</text>
<text x="83" y="474" font-size="8.5" fill="#000" stroke="#000" stroke-width="0.15" text-anchor="middle" font-weight="bold" transform="rotate(-90 83 474)">9'-8"</text>
<text x="83" y="620" font-size="8.5" fill="#000" stroke="#000" stroke-width="0.15" text-anchor="middle" font-weight="bold" transform="rotate(-90 83 620)">8'-3"</text>
<text x="35" y="668" font-size="8.5" fill="#000" stroke="#000" stroke-width="0.15" text-anchor="middle" font-weight="bold" transform="rotate(-90 35 668)">54'-9"</text>
<text x="59" y="814" font-size="8.5" fill="#000" stroke="#000" stroke-width="0.15" text-anchor="middle" font-weight="bold" transform="rotate(-90 59 814)">32'-0"</text>
<text x="83" y="802" font-size="8.5" fill="#000" stroke="#000" stroke-width="0.15" text-anchor="middle" font-weight="bold" transform="rotate(-90 83 802)">14'-0"</text>
<path d="M235.500 395.500H320M235.500 400.500H320M235.500 395.500V553M240.500 400.500V553M236 471.500h4M236 476.500h4" stroke="#008080" />
<path d="M244 397.500H320" stroke="#ff00ff" stroke-dasharray="18 5"/>
<path d="M238.500 402V553" stroke="#ff00ff" stroke-dasharray="18 5"/>
<use href="#ov" x="301" y="405"/>
<text x="306" y="411" font-size="8" fill="#000" stroke="#000" stroke-width="0.15" text-anchor="start" font-weight="bold">WP</text>
<path d="M236 527.500H320M240 524.500l-4 3l4 3" stroke="#000" />
<text x="306" y="525" font-size="8.5" fill="#000" stroke="#000" stroke-width="0.15" text-anchor="middle" font-weight="bold">8'-7"</text>
<path d="M235.500 553V688M240.500 558.500H320M240.500 558.500V688.500M232.500 686.500h3M232.500 686.500V734.500h3M235.500 731.500h5V889.500h-5zM235.500 731.500V889" stroke="#000" />
<path d="M235.500 889.500V900M238 889.500V900M240.500 889.500V900" stroke="#ff00ff" />
<text x="256" y="584" font-size="13.2" fill="#000" stroke="#000" stroke-width="0.35" text-anchor="start" font-weight="normal">WORKSHOP</text>
<path d="M253 588.500H309" stroke="#0000ff" />
<use href="#ov" x="305" y="563"/>
<path d="M270 603.500h60v7h-60zM270 607h60" stroke="#808000" />
<path d="M303 611c0 18 5 28 16 35" stroke="#808000" />
<use href="#oh" x="245" y="623"/>
<use href="#oh" x="245" y="810"/>
<path d="M235 669.500H186.500V750.500H235" stroke="#808080" />
<text x="213" y="685" font-size="8" fill="#000" stroke="#000" stroke-width="0.35" text-anchor="middle" font-weight="normal">CONC.</text>
<text x="208" y="697.5" font-size="8" fill="#000" stroke="#000" stroke-width="0.15" text-anchor="middle" font-weight="bold">PAD</text>
<path d="M195 701.500H226" stroke="#0000ff" />
<text x="205" y="717" font-size="7.5" fill="#000" stroke="#000" stroke-width="0.35" text-anchor="middle" font-weight="normal">3' X 5'</text>
<path d="M244 704.500l8.500 8.500l-8.500 8.500l-8.500-8.500z" stroke="#0000ff" />
<text x="244" y="713" font-size="8" fill="#0000ff" stroke="#0000ff" stroke-width="0.25" text-anchor="middle" dominant-baseline="central" transform="rotate(0 244 713)">8</text>
<path d="M239 688.500l32 31M241.500 688.500l31 30M271.500 719.500C262 727 252 731 240.500 731.500" stroke="#008000" />
<use href="#lt" x="228" y="759"/>
<path d="M241 743.500h10c4 0 8 6 8 12c0 10-8 17-16 17c-8 0-13-3-15-8" stroke="#808000" />
<path d="M244 741.500v4M246 741.500v4M248 741.500v4" stroke="#808000" />
<path d="M346.500 658V666M344 663.500l2.500 2.500l2.500-2.500M346.500 666.500H599M372.500 658V666M375.500 660.500H416.500V658M422 660.500H503M507.500 660.500H540.500V658M548 658V666M551 658v9h3M596 658v9h-3" stroke="#000" />
<text x="399" y="691" font-size="8.5" fill="#000" stroke="#000" stroke-width="0.35" text-anchor="middle" font-weight="normal">6" WALL</text>
<path d="M423 689.500H436.500V663" stroke="#0000ff" />
<use href="#ov" x="461" y="671"/>
<path d="M478.500 666V715.500M475.500 669.500l3-3l3 3M475.500 712.500l3 3l3-3M477 715.500H508" stroke="#000" />
<text x="476" y="691" font-size="8.5" fill="#000" stroke="#000" stroke-width="0.15" text-anchor="middle" font-weight="bold" transform="rotate(-90 476 691)">3'-0"</text>
<path d="M507.500 666V716M521.500 666V716M534.500 666V716M548.500 666V716M505.500 715.500h5v5h-5zM546.500 715.500h5v5h-5zM594.500 715.500h5v5h-5zM510 717h37M510 719.500h37M551 717h44M551 719.500h44" stroke="#000" />
<use href="#sw" x="529" y="672"/><use href="#sw" x="540" y="672"/>
<path d="M530 681C520 730 500 770 470 800S430 830 421 833.500" stroke="#808000" />
<path d="M539 683C520 730 512 800 517 900" stroke="#808000" />
<path d="M551.500 668.500l31 29M553.500 667.500l30 28M583 697C590 690 595 680 596 668" stroke="#008000" />
<path d="M577 649l9 9l-9 9l-9-9z" stroke="#0000ff" />
<path d="M599.500 658V900M605.500 658V900" stroke="#000" />
<path d="M550.500 720V750M550.500 747.500H599M553.500 744.500l-3 3l3 3M596 744.500l3 3l-3 3" stroke="#000" />
<text x="575" y="745" font-size="8.5" fill="#000" stroke="#000" stroke-width="0.15" text-anchor="middle" font-weight="bold">3'-0"</text>
<path d="M605.500 674.500H690M637.500 707.500H690M637.500 707.500V803M605.500 803.500H637.500M605.500 846.500H637.500M637.500 846.500V872.500H690" stroke="#800080" />
<path d="M621.500 658V872" stroke="#800080" stroke-dasharray="22 6"/>
<path d="M620 872l14 10" stroke="#800080" />
<path d="M637.500 886V900" stroke="#800080" />
<path d="M644.500 675V707M676.500 675V707" stroke="#808080" />
<text x="659" y="694" font-size="8" fill="#000" stroke="#000" stroke-width="0.35" text-anchor="middle" font-weight="normal">D/W</text>
<path d="M684.500 676V705" stroke="#0000ff" />
<use href="#ov" x="640" y="679"/><use href="#ov" x="666" y="679"/>
<use href="#oh" x="609" y="714"/>
<g transform="translate(594 775) scale(-1 1)"><use href="#oh"/></g>
<use href="#oh" x="609" y="882"/>
<path d="M605.500 731.500H637.500V772.500H605.500M623.500 731.500V772.500" stroke="#808080" />
<g stroke="#808080"><circle cx="612.500" cy="740.500" r="4.500"/><circle cx="630.500" cy="740.500" r="4.500"/><circle cx="612.500" cy="763.500" r="4.500"/><circle cx="630.500" cy="763.500" r="4.500"/></g>
<path d="M690 751.500H660.500V817.500H690M660.500 784.500H690" stroke="#808000" />
<path d="M607.500 803.500H643.500V846.500H607.500z" stroke="#808080" />
<path d="M605.500 803.500H637.500M605.500 846.500H637.500" stroke="#800080" />
<text x="624" y="823" font-size="8" fill="#000" stroke="#000" stroke-width="0.35" text-anchor="middle" font-weight="normal">REF.</text>
<text x="644" y="860" font-size="13.2" fill="#000" stroke="#000" stroke-width="0.35" text-anchor="start" font-weight="normal">KITCHEN</text>
<path d="M642 863.500H690" stroke="#0000ff" />
<path d="M385.500 831.500H452.500V838.500H385.500zM385.500 835H452.500" stroke="#808000" />
<use href="#ov" x="420" y="884"/>
<text x="429" y="888" font-size="7.5" fill="#000" stroke="#000" stroke-width="0.15" text-anchor="start" font-weight="bold">IN CEILING</text>
<path d="M838 222.500H1196M838 224.500H938M838 228.500H938M1096 224.500H1196M1096 228.500H1196M933.500 214V222M937.500 214V222M1096.500 214V222M1100.500 214V222" stroke="#008080" />
<path d="M835.500 222.500h5v5h-5zM935.500 222.500h5v5h-5zM1093.500 222.500h5v5h-5zM1193.500 222.500h5v5h-5z" stroke="#008080" fill="#fff"/>
<path d="M838 222.500L818 238M840 224.500L821 239M842 227L824 241" stroke="#008080" />
<path d="M1197 223.500L1423 395.500M1196 226L1421 397.500M1194.500 228L1419.500 399.500" stroke="#008080" />
<path d="M1421.500 397V492M1424.500 397V492" stroke="#008080" stroke-width="1.3"/>
<path d="M1419.500 395.500h5v5h-5zM1419.500 489.500h5v5h-5z" stroke="#008080" fill="#fff"/>
<path d="M826 233.5H1204.8" stroke="#008080" />
<path d="M1086 245.5H1220.6" stroke="#008080" />
<path d="M1086 258.5H1237.6" stroke="#008080" />
<path d="M1086 270.5H1253.4" stroke="#008080" />
<path d="M1086 282.5H1269.1" stroke="#008080" />
<path d="M1086 294.5H1284.9" stroke="#008080" />
<path d="M1086 306.5H1300.6" stroke="#008080" />
<path d="M1086 319.5H1317.7" stroke="#008080" />
<path d="M1086 331.5H1333.4" stroke="#008080" />
<path d="M1086 356.5H1366.2" stroke="#008080" />
<path d="M1086 368.5H1382.0" stroke="#008080" />
<path d="M1086 380.5H1397.7" stroke="#008080" />
<path d="M1086 392.5H1413.4" stroke="#008080" />
<path d="M1197 404.5H1421.0" stroke="#008080" />
<path d="M1197 417.5H1421.0" stroke="#008080" />
<path d="M1197 429.5H1421.0" stroke="#008080" />
<path d="M1197 441.5H1421.0" stroke="#008080" />
<path d="M1197 454.5H1421.0" stroke="#008080" />
<path d="M1197 466.5H1245.8M1325.1 466.5H1421.0" stroke="#008080" />
<path d="M1197 478.5H1233.5M1337.3 478.5H1421.0" stroke="#008080" />
<path d="M1197 490.5H1221.1" stroke="#008080" />
<path d="M1086 343.500H1350" stroke="#00ff00" />
<path d="M1355 343.500H1378" stroke="#000" />
<circle cx="1350" cy="343" r="3.700" fill="#0000ff" stroke="#000"/><circle cx="1382" cy="343" r="3.700" fill="#00ff00" stroke="#000"/>
<path d="M1389.500 330l5 8M1394.500 330l-5 8" stroke="#000" />
<path d="M837.500 214V222M1196.500 214V222M886.500 214V222M884 219.500l2.500 2.500l2.500-2.500M886.500 222.500H933" stroke="#000" />
<path d="M1285.500 214V434M1424.500 214V395" stroke="#000" />
<path d="M1424.500 222.500H1621.500V900M1618.500 225.500l3-3l3 3M1424.500 395.500H1597.500V900M1594.500 398.500l3-3l3 3M1424 494.500H1572.500V900M1548.500 494.500V900M1545.500 497.500l3-3l3 3M1569.500 497.500l3-3l3 3" stroke="#000" />
<text x="1546" y="635" font-size="8.5" fill="#000" stroke="#000" stroke-width="0.15" text-anchor="middle" font-weight="bold" transform="rotate(-90 1546 635)">17'-4"</text>
<text x="1619" y="669" font-size="8.5" fill="#000" stroke="#000" stroke-width="0.15" text-anchor="middle" font-weight="bold" transform="rotate(-90 1619 669)">54'-9"</text>
<text x="1570" y="716" font-size="8.5" fill="#000" stroke="#000" stroke-width="0.15" text-anchor="middle" font-weight="bold" transform="rotate(-90 1570 716)">27'-2"</text>
<text x="1595" y="755" font-size="8.5" fill="#000" stroke="#000" stroke-width="0.15" text-anchor="middle" font-weight="bold" transform="rotate(-90 1595 755)">44'-2"</text>
<text x="1546" y="858" font-size="8.5" fill="#000" stroke="#000" stroke-width="0.15" text-anchor="middle" font-weight="bold" transform="rotate(-90 1546 858)">9'-10"</text>
<text x="1522" y="893" font-size="8.5" fill="#000" stroke="#000" stroke-width="0.15" text-anchor="middle" font-weight="bold" transform="rotate(-90 1522 893)">5'-8"</text>
<text x="1522" y="765" font-size="8.5" fill="#000" stroke="#000" stroke-width="0.15" text-anchor="middle" font-weight="bold" transform="rotate(-90 1522 765)">1'-6"</text>
<path d="M1086 395.500H1118M1115.500 395.500H1196.500V494.500H1217M1115.500 395.500V400.500H1192.500V502.500M1086 400.500H1115M1127 502.500H1192" stroke="#000" />
<path d="M1086 397H1115M1086 398.500H1115" stroke="#008000" />
<path d="M1162.500 400.500V502M1175.500 400.500V502" stroke="#800080" />
<path d="M1161.500 400.500L1147.500 413L1156.500 418L1148 423L1161.500 433.500L1148 446.500L1157 450.500L1148 455L1161.500 468L1148 479.500L1156.500 485L1148 489.500L1161.500 501.500M1161.500 403L1150 413.500M1150 423L1161.500 431M1161.500 436L1150 446.500M1150 455L1161.500 465.500M1161.500 470.500L1150 479.500M1150 489.500L1161.500 499" stroke="#008000" />
<text x="1191" y="434" font-size="8.5" fill="#000" stroke="#000" stroke-width="0.35" text-anchor="middle" font-weight="normal" transform="rotate(-90 1191 434)">CABINETS</text>
<text x="1087" y="430" font-size="8.5" fill="#000" stroke="#000" stroke-width="0.35" text-anchor="start" font-weight="normal">W ABOVE</text>
<text x="1184" y="387" font-size="8" fill="#000" stroke="#000" stroke-width="0.15" text-anchor="start" font-weight="bold">WP</text>
<use href="#lt" x="1158" y="386"/><use href="#ov" x="1177" y="390"/><use href="#sw" x="1126" y="405"/><use href="#ov" x="1142" y="405"/>
<path d="M1086 368c25 2 50 8 66 14M1153 388c-12 2-22 6-27 11" stroke="#808000" />
<path d="M1196.500 499.500H1268" stroke="#000" />
<path d="M1196.5 494.5L1217.0 494.5L1222.5 489.5L1227.5 494.5L1222.5 499.5" stroke="#000" />
<path d="M1252.5 470.5L1247.0 465.0L1252.0 460.5L1257.0 460.5L1257.0 464.5L1254.0 464.5L1252.5 470.5" stroke="#000" />
<path d="M1318.0 470.5L1323.5 465.0L1318.5 460.5L1313.5 460.5L1313.5 464.5L1316.5 464.5L1318.0 470.5" stroke="#000" />
<path d="M1353.5 494.5L1348.0 489.5L1343.0 494.5" stroke="#000" />
<path d="M1353.500 494.500l3 3H1367V491.500H1411" stroke="#000" />
<path d="M1222.5 491.5L1248.0 466.0M1224.3 493.2L1249.8 467.7M1226.0 495.0L1251.5 469.5M1348.0 491.5L1322.5 466.0M1346.2 493.2L1320.7 467.7M1344.5 495.0L1319.0 469.5M1257 462.500H1313.500" stroke="#ff00ff" />
<path d="M1257 460.500H1313.500M1257 464.500H1313.500" stroke="#ff00ff" />
<path d="M1268.500 464.500V499M1266 467l2.500-2.500l2.500 2.500M1266 497l2.500 2.500l2.500-2.500M1262 464.500H1271" stroke="#000" />
<text x="1265" y="482" font-size="8.5" fill="#000" stroke="#000" stroke-width="0.15" text-anchor="middle" font-weight="bold" transform="rotate(-90 1265 482)">2'-2"</text>
<use href="#ov" x="1275" y="469"/>
<g stroke="#0000ff"><circle cx="1285.500" cy="442.500" r="8.200"/><circle cx="1228" cy="470.500" r="8.200"/><circle cx="1344" cy="470.500" r="8.200"/></g>
<text x="1285.5" y="442.5" font-size="8.5" fill="#0000ff" stroke="#0000ff" stroke-width="0.25" text-anchor="middle" dominant-baseline="central" transform="rotate(0 1285.5 442.5)">F</text>
<text x="1228" y="470.5" font-size="8.5" fill="#0000ff" stroke="#0000ff" stroke-width="0.25" text-anchor="middle" dominant-baseline="central" transform="rotate(-45 1228 470.5)">A</text>
<text x="1344" y="470.5" font-size="8.5" fill="#0000ff" stroke="#0000ff" stroke-width="0.25" text-anchor="middle" dominant-baseline="central" transform="rotate(45 1344 470.5)">A</text>
<use href="#lt" x="1359" y="484"/><use href="#sw" x="1357" y="503"/>
<path d="M1364 484c6 3 8 10 7 16c-2 8-8 10-14 11" stroke="#808000" />
<path d="M1383 496l8 8l-8 8l-8-8z" stroke="#0000ff" />
<text x="1383" y="504" font-size="8" fill="#0000ff" stroke="#0000ff" stroke-width="0.25" text-anchor="middle" dominant-baseline="central" transform="rotate(0 1383 504)">6</text>
<path d="M1410 497.500L1379 529M1412 499L1381 531M1367 503C1369 516 1373 524 1379 530" stroke="#008000" />
<path d="M1411 491.500V497.500H1419.500M1411 491.500H1419.500M1419.500 489.500V900M1424.500 494.500V900" stroke="#000" />
<g transform="translate(1414 561) scale(-1 1)"><use href="#oh"/></g>
<g transform="translate(1414 717) scale(-1 1)"><use href="#oh"/></g>
<path d="M1124.500 580V507.500c0-3 2-5.500 5.500-5.500M1150.500 502.500V580M1153.500 506.500H1192.500M1153.500 506.500V515.500h2v5M1150.500 518.500h3M1150.500 575.500h3M1153.500 587.500V576.500h2v-4.500M1153.500 587.500H1192.500M1196.500 499.500V724.500M1192.500 502.500V590" stroke="#000" />
<path d="M1155.500 520.500L1186 530.500V563.500L1155.500 572" stroke="#000" stroke-width="2" stroke-dasharray="5 .6"/>
<text x="1164" y="551" font-size="8.5" fill="#000" stroke="#000" stroke-width="0.15" text-anchor="middle" font-weight="bold">FP</text>
<use href="#lt" x="1115.500" y="549.500"/>
<path d="M1117 555c5 8 9 16 12 26" stroke="#808000" />
<use href="#oh" x="1201" y="534.500"/>
<path d="M1208 535c10 8 22 25 31 45c10 20 14 50 10 80c-4 30-20 60-45 85c-10 8-20 13-33 17" stroke="#808000" />
<path d="M1169 592.500H1192.500V678L1176 694H1169M1196.500 680L1179 698" stroke="#000" />
<path d="M1175.500 592.500V694" stroke="#800080" />
<text x="1191" y="626" font-size="8.5" fill="#000" stroke="#000" stroke-width="0.35" text-anchor="middle" font-weight="normal" transform="rotate(-90 1191 626)">CABINETS</text>
<use href="#oh" x="1201" y="662"/>
<path d="M1169 698.500H1212M1176 707.500H1211M1209.500 670V709M1197 678.500H1212M1169 722.500H1196.500M1177.500 698v11M1196.500 680v45M1206.500 681.500l3-3l3 3M1206.500 695.500l3 3l3-3M1180.500 704.500l-3 3l3 3M1193.500 704.500l3 3l-3 3M1193.500 719.500l3 3l-3 3" stroke="#000" />
<text x="1206.5" y="689" font-size="7.5" fill="#000" stroke="#000" stroke-width="0.15" text-anchor="middle" font-weight="bold" transform="rotate(-90 1206.5 689)">1'-2"</text>
<text x="1187" y="705.5" font-size="7.5" fill="#000" stroke="#000" stroke-width="0.15" text-anchor="middle" font-weight="bold">1'-2"</text>
<text x="1321.5" y="605" font-size="13.2" fill="#000" stroke="#000" stroke-width="0.35" text-anchor="middle" font-weight="normal">MASTER BEDROOM</text>
<path d="M1253 610.500H1389" stroke="#0000ff" />
<path d="M1312 721.500H1282.500V786" stroke="#0000ff" />
<text x="1313" y="722.5" font-size="8.5" fill="#000" stroke="#000" stroke-width="0.35" text-anchor="start" font-weight="normal">1/2 WALL WITH</text>
<text x="1313" y="735" font-size="8.5" fill="#000" stroke="#000" stroke-width="0.35" text-anchor="start" font-weight="normal">CULTURED MARBLE</text>
<text x="1313" y="747.5" font-size="8.5" fill="#000" stroke="#000" stroke-width="0.35" text-anchor="start" font-weight="normal">SILL</text>
<path d="M1419.500 737V769M1422 737V769M1424.500 737V769M1419.500 829V862M1422 829V862M1424.500 829V862" stroke="#ff00ff" stroke-width="1.2"/>
<path d="M1419.500 737.500h5M1419.500 769.500h5M1419.500 829.500h5M1419.500 862.500h5" stroke="#000" />
<path d="M1425 753.500H1445M1425 846.500H1445" stroke="#ff0000" />
<g stroke="#0000ff"><circle cx="1453.500" cy="753.500" r="8.200"/><circle cx="1453.500" cy="846" r="8.200"/></g>
<text x="1453.5" y="753.5" font-size="8.5" fill="#0000ff" stroke="#0000ff" stroke-width="0.25" text-anchor="middle" dominant-baseline="central" transform="rotate(-90 1453.5 753.5)">A</text>
<text x="1453.5" y="846" font-size="8.5" fill="#0000ff" stroke="#0000ff" stroke-width="0.25" text-anchor="middle" dominant-baseline="central" transform="rotate(-90 1453.5 846)">L</text>
<path d="M1462 753.500H1523M1462 846.500H1523.500V900M1523.500 742V788M1424.500 777.500H1548M1520.500 756.500l3-3l3 3M1520.500 774.500l3 3l3-3M1520.500 780.500l3-3l3 3M1545 774l7 7M1545 781l7-7M1520.500 849.500l3-3l3 3" stroke="#000" />
<path d="M1169 777.500H1200.500V782.500H1172.500V863H1169M1249 777.500H1419.500M1249 777.500V782.500H1419.500" stroke="#000" />
<path d="M1201 778L1218 760L1225 776L1232 760L1249 778M1203 780L1218 763.500M1247 780L1232 763.500" stroke="#008000" />
<path d="M1188.500 745V790M1172 801.500H1191M1172 850.500H1191M1188.500 801.500V850.500M1185.500 804.500l3-3l3 3M1185.500 847.500l3 3l3-3M1169 753.500H1191M1185.500 756.500l3-3l3 3M1185.500 774.500l3 3l3-3" stroke="#000" />
<text x="1186" y="768" font-size="8.5" fill="#000" stroke="#000" stroke-width="0.15" text-anchor="middle" font-weight="bold" transform="rotate(-90 1186 768)">1'-8"</text>
<text x="1186" y="826" font-size="8.5" fill="#000" stroke="#000" stroke-width="0.15" text-anchor="middle" font-weight="bold" transform="rotate(-90 1186 826)">3'-0"</text>
<path d="M1225 797l9 9l-9 9l-9-9z" stroke="#0000ff" />
<text x="1225" y="806" font-size="8" fill="#0000ff" stroke="#0000ff" stroke-width="0.25" text-anchor="middle" dominant-baseline="central" transform="rotate(0 1225 806)">14</text>
<use href="#lt" x="1235.500" y="842"/>
<path d="M1235 835c-2-20 6-38 22-46M1262 790c8 40 40 90 92 112M1272 779c8-12 26-14 34 8" stroke="#808000" />
<use href="#sw" x="1256" y="786"/><use href="#sw" x="1264" y="786"/><use href="#sw" x="1272" y="786"/>
<use href="#ov" x="1334" y="773"/><use href="#ov" x="1294" y="786"/><use href="#ov" x="1411" y="786"/>
<text x="1295" y="800" font-size="5.5" fill="#000" stroke="#000" stroke-width="0.15" text-anchor="middle" font-weight="bold">GF</text>
<text x="1412" y="800" font-size="5.5" fill="#000" stroke="#000" stroke-width="0.15" text-anchor="middle" font-weight="bold">GF</text>
<path d="M1277.500 783V818.500H1288.500V783M1280.500 783V815.500H1285.500V783M1288.500 815.500H1419" stroke="#800080" />
<path d="M1303.500 785.500H1405.500V789.500H1303.500z" stroke="#808000" />
<g stroke="#0000a0"><ellipse cx="1316" cy="799.500" rx="13.500" ry="11.500"/><ellipse cx="1316" cy="799.500" rx="11" ry="9.500"/><ellipse cx="1391" cy="799.500" rx="13.500" ry="11.500"/><ellipse cx="1391" cy="799.500" rx="11" ry="9.500"/></g>
<g fill="#0000c0"><rect x="1312" y="787" width="8" height="2.500"/><rect x="1312" y="810" width="8" height="2.500"/><rect x="1387" y="787" width="8" height="2.500"/><rect x="1387" y="810" width="8" height="2.500"/></g>
<path d="M1417.500 786.500H1423.500V811.500H1417.500z" stroke="#000" fill="#fff"/>
<text x="1351" y="823" font-size="8.5" fill="#000" stroke="#000" stroke-width="0.35" text-anchor="middle" font-weight="normal">8' VANITY</text>
<text x="1349.5" y="846.5" font-size="13.2" fill="#000" stroke="#000" stroke-width="0.35" text-anchor="middle" font-weight="normal">MASTER BATH</text>
<path d="M1298 850.500H1400" stroke="#0000ff" />
<text x="1358.5" y="872" font-size="8.5" fill="#000" stroke="#000" stroke-width="0.35" text-anchor="middle" font-weight="normal">WHIRLPOOL</text>
<path d="M1288.500 900V876.500H1419M1304.500 876.500V900M1402.500 876.500V900M1290.500 881.500h14v14h-14zM1402.500 881.500h14v14h-14z" stroke="#800080" />
<g stroke="#800080"><circle cx="1297.500" cy="888.500" r="5"/><circle cx="1409.500" cy="888.500" r="5"/></g>
<ellipse cx="1354" cy="910" rx="46" ry="28" stroke="#0000a0"/>
<path d="M1161 878l9-9l9 9l-9 9z" stroke="#0000ff" />
<text x="1170" y="878" font-size="8" fill="#0000ff" stroke="#0000ff" stroke-width="0.25" text-anchor="middle" dominant-baseline="central" transform="rotate(0 1170 878)">2</text>
<path d="M1195 900L1207 889L1213 898L1219 889L1230 900M1197.500 900L1207 891.500M1250 900L1257 886L1272 900M1252.500 900L1257 889" stroke="#008000" />
<path d="M1252 900l8-8l8 8" stroke="#0000ff" />
<use href="#sw" x="1183" y="898"/>
</g></svg>
<!-- ===== SCROLLBARS / TABS ===== -->
<div class="abs" style="left:1662px;top:214px;width:1px;height:686px;background:#d8d8d8"></div>
<div class="abs" style="left:1663px;top:214px;width:17px;height:686px;background:#6e6e6e"></div>
<div class="abs" style="left:1663px;top:214px;width:17px;height:16px;background:#555"></div>
<div class="abs" style="left:1663px;top:884px;width:17px;height:16px;background:#555"></div>
<div class="abs" style="left:1664px;top:420px;width:16px;height:76px;background:#555;border:1px solid #5e5e5e"></div>
<div class="arr" style="left:1667px;top:219px;border-top:none;border-bottom:4px solid #fff"></div>
<div class="arr" style="left:1667px;top:890px"></div>
<div class="abs" style="left:16px;top:900px;width:1664px;height:1px;background:#d8d8d8"></div>
<div class="abs" style="left:16px;top:901px;width:1664px;height:18px;background:#555"></div>
<div class="abs" style="left:203px;top:901px;width:1443px;height:18px;background:#6e6e6e"></div>
<div class="abs" style="left:183px;top:901px;width:2px;height:18px;background:#f0f0f0"></div>
<div class="abs" style="left:186px;top:901px;width:17px;height:18px;background:#555"></div>
<div class="abs" style="left:191px;top:906px;width:0;height:0;border-top:4px solid transparent;border-bottom:4px solid transparent;border-right:4px solid #fff"></div>
<div class="abs" style="left:1652px;top:906px;width:0;height:0;border-top:4px solid transparent;border-bottom:4px solid transparent;border-left:4px solid #fff"></div>
<div class="abs" style="left:21px;top:900px;width:66px;height:18px;background:#555;border:1px solid #2e2e2e;border-top:none;border-radius:0 0 3px 3px"></div>
<div class="abs" style="left:88px;top:901px;width:68px;height:16px;background:#4c4c4c;border:1px solid #444;border-top:none;border-radius:0 0 3px 3px"></div>
<div class="t" style="left:43px;top:903px;font-size:13px;color:#fff">Model</div>
<div class="t" style="left:109px;top:903px;font-size:13px;color:#b4b4b4;height:12px;overflow:hidden">Paper 1</div>
<svg style="left:26px;top:902px" width="16" height="16" viewBox="0 0 16 16"><circle cx="6" cy="6" r="4" fill="#555" stroke="#fff" stroke-width="1.3"/><circle cx="9" cy="9.500" r="4.200" fill="#ddd" stroke="#222" stroke-width="1"/><circle cx="8" cy="8.500" r="1.500" fill="#fff"/></svg>
<svg style="left:94px;top:902px" width="12" height="15" viewBox="0 0 12 15"><path d="M1 1h6l3.500 3.500v9.500h-9.500z" fill="#fff" stroke="#222" stroke-width="1"/><text x="3.500" y="12" font-size="9" font-family="Liberation Sans,sans-serif" fill="#00008b" font-weight="bold">1</text></svg>
<div class="abs" style="left:0;top:919px;width:1680px;height:41px;background:#484848;border-top:1px solid #5e5e5e"></div>
<div class="abs" style="left:0;top:960px;width:1680px;height:25px;background:#525252"></div>
<div class="t" style="left:8px;top:964px;font-size:12.2px;letter-spacing:-.2px">Edit the selected object(s)</div>
<div class="abs" style="left:6px;top:924px;width:2px;height:2px;background:#6e6e6e"></div>
<div class="abs" style="left:6px;top:928px;width:2px;height:2px;background:#6e6e6e"></div>
<div class="abs" style="left:6px;top:931px;width:2px;height:2px;background:#6e6e6e"></div>
<div class="abs" style="left:6px;top:935px;width:2px;height:2px;background:#6e6e6e"></div>
<div class="abs" style="left:6px;top:938px;width:2px;height:2px;background:#6e6e6e"></div>
<div class="abs" style="left:6px;top:942px;width:2px;height:2px;background:#6e6e6e"></div>
<div class="abs" style="left:6px;top:946px;width:2px;height:2px;background:#6e6e6e"></div>
<div class="abs" style="left:6px;top:949px;width:2px;height:2px;background:#6e6e6e"></div>
<div class="abs" style="left:6px;top:953px;width:2px;height:2px;background:#6e6e6e"></div>
<div class="abs" style="left:96px;top:926px;width:2px;height:28px;background:#2e2e2e;border-right:1px solid #666"></div>
<div class="t" style="left:102px;top:923px;font-size:12.2px;letter-spacing:-.55px">Scale X</div>
<div class="abs" style="left:103px;top:938px;width:53px;height:20px;background:#2a2a2a;border:1px solid #7d7d7d;overflow:hidden"><div class="t" style="left:3px;top:2px;font-size:12.2px;letter-spacing:-.3px">1</div></div>
<div class="abs" style="left:140px;top:939px;width:15px;height:18px;background:#4a4a4a"></div>
<div class="abs" style="left:140px;top:947px;width:15px;height:1px;background:#333"></div>
<div class="arr" style="left:145px;top:942px;border-width:0 2.500px 3px 2.500px;border-top:none;border-bottom:3px solid #fff;border-left:2.500px solid transparent;border-right:2.500px solid transparent"></div>
<div class="arr" style="left:145px;top:951px;border-width:3px 2.500px 0 2.500px"></div>
<div class="t" style="left:159px;top:923px;font-size:12.2px;letter-spacing:-.55px">Scale Y</div>
<div class="abs" style="left:160px;top:938px;width:53px;height:20px;background:#2a2a2a;border:1px solid #7d7d7d;overflow:hidden"><div class="t" style="left:3px;top:2px;font-size:12.2px;letter-spacing:-.3px">1</div></div>
<div class="abs" style="left:197px;top:939px;width:15px;height:18px;background:#4a4a4a"></div>
<div class="abs" style="left:197px;top:947px;width:15px;height:1px;background:#333"></div>
<div class="arr" style="left:202px;top:942px;border-width:0 2.500px 3px 2.500px;border-top:none;border-bottom:3px solid #fff;border-left:2.500px solid transparent;border-right:2.500px solid transparent"></div>
<div class="arr" style="left:202px;top:951px;border-width:3px 2.500px 0 2.500px"></div>
<div class="t" style="left:216px;top:923px;font-size:12.2px;letter-spacing:-.55px">Scale Z</div>
<div class="abs" style="left:217px;top:938px;width:53px;height:20px;background:#2a2a2a;border:1px solid #7d7d7d;overflow:hidden"><div class="t" style="left:3px;top:2px;font-size:12.2px;letter-spacing:-.3px">1</div></div>
<div class="abs" style="left:254px;top:939px;width:15px;height:18px;background:#4a4a4a"></div>
<div class="abs" style="left:254px;top:947px;width:15px;height:1px;background:#333"></div>
<div class="arr" style="left:259px;top:942px;border-width:0 2.500px 3px 2.500px;border-top:none;border-bottom:3px solid #fff;border-left:2.500px solid transparent;border-right:2.500px solid transparent"></div>
<div class="arr" style="left:259px;top:951px;border-width:3px 2.500px 0 2.500px"></div>
<div class="t" style="left:273px;top:923px;font-size:12.2px;letter-spacing:-.55px">Size X</div>
<div class="abs" style="left:274px;top:938px;width:53px;height:20px;background:#2a2a2a;border:1px solid #7d7d7d;overflow:hidden"><div class="t" style="left:3px;top:2px;font-size:12.2px;letter-spacing:-.3px">41'-0 3/4</div></div>
<div class="t" style="left:330px;top:923px;font-size:12.2px;letter-spacing:-.55px">Size Y</div>
<div class="abs" style="left:331px;top:938px;width:53px;height:20px;background:#2a2a2a;border:1px solid #7d7d7d;overflow:hidden"><div class="t" style="left:3px;top:2px;font-size:12.2px;letter-spacing:-.3px">0"</div></div>
<div class="t" style="left:387px;top:923px;font-size:12.2px;letter-spacing:-.55px">Size Z</div>
<div class="abs" style="left:388px;top:938px;width:53px;height:20px;background:#2a2a2a;border:1px solid #7d7d7d;overflow:hidden"><div class="t" style="left:3px;top:2px;font-size:12.2px;letter-spacing:-.3px">0"</div></div>
<div class="t" style="left:444px;top:923px;font-size:12.2px;letter-spacing:-.55px">Pos X</div>
<div class="abs" style="left:445px;top:938px;width:53px;height:20px;background:#2a2a2a;border:1px solid #7d7d7d;overflow:hidden"><div class="t" style="left:3px;top:2px;font-size:12.2px;letter-spacing:-.3px">66'-10 1/</div></div>
<div class="t" style="left:501px;top:923px;font-size:12.2px;letter-spacing:-.55px">Pos Y</div>
<div class="abs" style="left:502px;top:938px;width:53px;height:20px;background:#2a2a2a;border:1px solid #7d7d7d;overflow:hidden"><div class="t" style="left:3px;top:2px;font-size:12.2px;letter-spacing:-.3px">67'-2 3/4</div></div>
<div class="t" style="left:558px;top:923px;font-size:12.2px;letter-spacing:-.55px">Pos Z</div>
<div class="abs" style="left:559px;top:938px;width:53px;height:20px;background:#2a2a2a;border:1px solid #7d7d7d;overflow:hidden"><div class="t" style="left:3px;top:2px;font-size:12.2px;letter-spacing:-.3px">0"</div></div>
<div class="t" style="left:615px;top:923px;font-size:12.2px;letter-spacing:-.55px">Delta X</div>
<div class="abs" style="left:616px;top:938px;width:53px;height:20px;background:#2a2a2a;border:1px solid #7d7d7d;overflow:hidden"><div class="t" style="left:3px;top:2px;font-size:12.2px;letter-spacing:-.3px">0"</div></div>
<div class="t" style="left:672px;top:923px;font-size:12.2px;letter-spacing:-.55px">Delta Y</div>
<div class="abs" style="left:673px;top:938px;width:53px;height:20px;background:#2a2a2a;border:1px solid #7d7d7d;overflow:hidden"><div class="t" style="left:3px;top:2px;font-size:12.2px;letter-spacing:-.3px">0"</div></div>
<div class="t" style="left:729px;top:923px;font-size:12.2px;letter-spacing:-.55px">Delta Z</div>
<div class="abs" style="left:730px;top:938px;width:53px;height:20px;background:#2a2a2a;border:1px solid #7d7d7d;overflow:hidden"><div class="t" style="left:3px;top:2px;font-size:12.2px;letter-spacing:-.3px">0"</div></div>
<div class="t" style="left:786px;top:923px;font-size:12.2px;letter-spacing:-.55px">Rot X</div>
<div class="abs" style="left:787px;top:938px;width:53px;height:20px;background:#2a2a2a;border:1px solid #7d7d7d;overflow:hidden"><div class="t" style="left:3px;top:2px;font-size:12.2px;letter-spacing:-.3px">0</div></div>
<div class="abs" style="left:824px;top:939px;width:15px;height:18px;background:#4a4a4a"></div>
<div class="abs" style="left:824px;top:947px;width:15px;height:1px;background:#333"></div>
<div class="arr" style="left:829px;top:942px;border-width:0 2.500px 3px 2.500px;border-top:none;border-bottom:3px solid #fff;border-left:2.500px solid transparent;border-right:2.500px solid transparent"></div>
<div class="arr" style="left:829px;top:951px;border-width:3px 2.500px 0 2.500px"></div>
<div class="t" style="left:843px;top:923px;font-size:12.2px;letter-spacing:-.55px">Rot Y</div>
<div class="abs" style="left:844px;top:938px;width:53px;height:20px;background:#2a2a2a;border:1px solid #7d7d7d;overflow:hidden"><div class="t" style="left:3px;top:2px;font-size:12.2px;letter-spacing:-.3px">0</div></div>
<div class="abs" style="left:881px;top:939px;width:15px;height:18px;background:#4a4a4a"></div>
<div class="abs" style="left:881px;top:947px;width:15px;height:1px;background:#333"></div>
<div class="arr" style="left:886px;top:942px;border-width:0 2.500px 3px 2.500px;border-top:none;border-bottom:3px solid #fff;border-left:2.500px solid transparent;border-right:2.500px solid transparent"></div>
<div class="arr" style="left:886px;top:951px;border-width:3px 2.500px 0 2.500px"></div>
<div class="t" style="left:900px;top:923px;font-size:12.2px;letter-spacing:-.55px">Rot Z</div>
<div class="abs" style="left:901px;top:938px;width:53px;height:20px;background:#2a2a2a;border:1px solid #7d7d7d;overflow:hidden"><div class="t" style="left:3px;top:2px;font-size:12.2px;letter-spacing:-.3px">0</div></div>
<div class="abs" style="left:938px;top:939px;width:15px;height:18px;background:#4a4a4a"></div>
<div class="abs" style="left:938px;top:947px;width:15px;height:1px;background:#333"></div>
<div class="arr" style="left:943px;top:942px;border-width:0 2.500px 3px 2.500px;border-top:none;border-bottom:3px solid #fff;border-left:2.500px solid transparent;border-right:2.500px solid transparent"></div>
<div class="arr" style="left:943px;top:951px;border-width:3px 2.500px 0 2.500px"></div>
<div class="t" style="left:957px;top:923px;font-size:12.2px;letter-spacing:-.55px">Radius</div>
<div class="abs" style="left:958px;top:938px;width:53px;height:20px;background:#2a2a2a;border:1px solid #7d7d7d;overflow:hidden"><div class="t" style="left:3px;top:2px;font-size:12.2px;letter-spacing:-.3px">0"</div></div>
<div class="t" style="left:1014px;top:923px;font-size:12.2px;letter-spacing:-.55px">Angle</div>
<div class="abs" style="left:1015px;top:938px;width:53px;height:20px;background:#2a2a2a;border:1px solid #7d7d7d;overflow:hidden"><div class="t" style="left:3px;top:2px;font-size:12.2px;letter-spacing:-.3px">0</div></div>
<div class="abs" style="left:1052px;top:939px;width:15px;height:18px;background:#4a4a4a"></div>
<div class="abs" style="left:1052px;top:947px;width:15px;height:1px;background:#333"></div>
<div class="arr" style="left:1057px;top:942px;border-width:0 2.500px 3px 2.500px;border-top:none;border-bottom:3px solid #fff;border-left:2.500px solid transparent;border-right:2.500px solid transparent"></div>
<div class="arr" style="left:1057px;top:951px;border-width:3px 2.500px 0 2.500px"></div>
<div class="abs" style="left:1071px;top:926px;width:2px;height:28px;background:#2e2e2e;border-right:1px solid #666"></div>
<div class="abs" style="left:1161px;top:926px;width:2px;height:28px;background:#2e2e2e;border-right:1px solid #666"></div>
<div class="t" style="left:1213px;top:968px;font-size:12px;letter-spacing:-.3px">SNAP</div>
<div class="t" style="left:1251px;top:968px;font-size:12px;letter-spacing:-.3px">GEO</div>
<div class="abs" style="left:1290px;top:966px;width:7px;height:7px;border:1px solid #fff"></div>
<div class="t" style="left:1290px;top:975px;font-size:8.500px;line-height:9px;color:#d8d8d8">X</div>
<div class="abs" style="left:1300px;top:965px;width:73px;height:19px;background:#2a2a2a;border:1px solid #7d7d7d"><div class="t" style="left:4px;top:2px;font-size:12.2px;color:#fff">94'-9"</div></div>
<div class="abs" style="left:1382px;top:966px;width:7px;height:7px;border:1px solid #fff"></div>
<div class="t" style="left:1382px;top:975px;font-size:8.500px;line-height:9px;color:#d8d8d8">Y</div>
<div class="abs" style="left:1392px;top:965px;width:73px;height:19px;background:#2a2a2a;border:1px solid #7d7d7d"><div class="t" style="left:4px;top:2px;font-size:12.2px;color:#fff">33'-7 3/4"</div></div>
<div class="abs" style="left:1474px;top:966px;width:7px;height:7px;border:1px solid #777"></div>
<div class="t" style="left:1474px;top:975px;font-size:8.500px;line-height:9px;color:#999">Z</div>
<div class="abs" style="left:1484px;top:965px;width:73px;height:19px;background:#2a2a2a;border:1px solid #666"><div class="t" style="left:4px;top:2px;font-size:12.2px;color:#8c8c8c">7'-10"</div></div>
<div class="t" style="left:1566px;top:963px;font-size:12px;color:#e6e6e6">68%</div>
<div class="t" style="left:1622px;top:963px;font-size:12px">11:51 AM</div>
<!--BOTTOM_ICONS-->
<svg style="left:0;top:920px" width="1680" height="40" viewBox="0 920 1680 40" fill="none" font-family="Liberation Sans,sans-serif">
<path d="M16 935v9c0 3 2 4 5 4h9" stroke="#ff3000" stroke-width="1.800"/><rect x="14" y="940" width="4.500" height="4" fill="#ff3000"/><rect x="21" y="946" width="4.500" height="4" fill="#ff3000"/><rect x="15.500" y="941.200" width="1.300" height="1.300" fill="#fff"/><rect x="22.500" y="947.200" width="1.300" height="1.300" fill="#fff"/>
<path d="M21 935l11.500 11" stroke="#aaa" stroke-width="1.500"/><path d="M20.500 934.500l4 4" stroke="#f0e000" stroke-width="2"/>
<path d="M25.5 929.8l1 1.200l1.200 1l-1.200 1l-1 1.200l-1-1.200l-1.200-1l1.200-1z" fill="#ffffc8"/>
<path d="M30.5 928.8l1 1.200l1.200 1l-1.200 1l-1 1.200l-1-1.200l-1.200-1l1.200-1z" fill="#ffffc8"/>
<path d="M28 934.3l1 1.200l1.200 1l-1.200 1l-1 1.200l-1-1.200l-1.200-1l1.200-1z" fill="#ffffc8"/>
<path d="M33.5 935.3l1 1.200l1.200 1l-1.200 1l-1 1.200l-1-1.200l-1.200-1l1.200-1z" fill="#ffffc8"/>
<path d="M43 933l2.500-2l7 7.500l7.500-7.500l1 .5l-6.500 9l7 8l-1 .5l-8-7l-7 8.500l-2.500-1.500l7.500-8.500z" fill="#ff0000"/>
<rect x="70.500" y="931.500" width="19.500" height="17.500" fill="#3a3a3a" stroke="#6aa5f8" stroke-width="1.200"/><rect x="71" y="932" width="18.500" height="3.200" fill="#6aa5f8"/>
<rect x="72.5" y="936.5" width="4.600" height="1.800" fill="#e8e8e8"/>
<rect x="78.2" y="936.5" width="4.600" height="1.800" fill="#e8e8e8"/>
<rect x="83.9" y="936.5" width="4.600" height="1.800" fill="#e8e8e8"/>
<rect x="72.5" y="939.5" width="4.600" height="1.800" fill="#e8e8e8"/>
<rect x="78.2" y="939.5" width="4.600" height="1.800" fill="#e8e8e8"/>
<rect x="83.9" y="939.5" width="4.600" height="1.800" fill="#e8e8e8"/>
<rect x="72.5" y="942.5" width="4.600" height="1.800" fill="#e8e8e8"/>
<rect x="78.2" y="942.5" width="4.600" height="1.800" fill="#e8e8e8"/>
<rect x="83.9" y="942.5" width="4.600" height="1.800" fill="#e8e8e8"/>
<rect x="72.5" y="945.5" width="4.600" height="1.800" fill="#e8e8e8"/>
<rect x="78.2" y="945.5" width="4.600" height="1.800" fill="#e8e8e8"/>
<rect x="83.9" y="945.5" width="4.600" height="1.800" fill="#e8e8e8"/>
<rect x="1166" y="927" width="26" height="26" fill="#6680a8"/>
<rect x="1171.500" y="933.500" width="15" height="13.500" fill="#00e000" stroke="#fff" stroke-width="1.200"/><path d="M1172 934l14.500 13h-14.500z" fill="#008080"/><path d="M1172 933.500h15M1186.500 933.500v13" stroke="#333" stroke-width=".8" stroke-dasharray="1 1.500"/>
<path d="M1199.500 933.500v14h15z" fill="#008080" stroke="#fff" stroke-width="1.300"/><text x="1204.500" y="938.500" font-size="7" font-weight="bold" fill="#fff" stroke="#222" stroke-width=".4" letter-spacing="-.5">WP</text>
<path d="M1228.500 933.500v14h15z" fill="#00e000" stroke="#fff" stroke-width="1.300" stroke-dasharray="1.500 1"/><text x="1234" y="938.500" font-size="7" font-weight="bold" fill="#fff" stroke="#222" stroke-width=".4" letter-spacing="-.5">CP</text>
<path d="M1265.500 936h-7.500v6h5.500v4h5.500" stroke="#fff" stroke-width="4.500"/><path d="M1265.500 936h-7.500v6h5.500v4h5.500" stroke="#00e000" stroke-width="2" stroke-dasharray="2.500 .8"/><text x="1267" y="939" font-size="7" font-weight="bold" fill="#fff">F</text>
<rect x="1279.500" y="927" width="1" height="27" fill="#2e2e2e"/><rect x="1280.500" y="927" width="1" height="27" fill="#666"/>
<path d="M1290 935v6h6z" fill="#8c8c8c"/><path d="M1294 938a4.500 4.500 0 1 1 7 4" stroke="#8c8c8c" stroke-width="1.500"/><path d="M1298.500 939v8l2-1.800l1.500 3l1.300-.6l-1.500-3h2.700z" fill="#8c8c8c"/>
<path d="M1318 934l8 1l-3 6z" fill="#f00000"/><path d="M1332 940l-1 8l-7-2z" fill="#6aa5f8"/><g stroke="#e8e040" stroke-width="1"><path d="M1316.500 932.500l3 3M1319.500 932.500l-3 3M1324.500 933.500l3 3M1327.500 933.500l-3 3M1321.500 939.500l3 3M1324.500 939.500l-3 3M1330.500 938.500l3 3M1333.500 938.500l-3 3M1321.500 944.500l3 3M1324.500 944.500l-3 3M1329.500 946.500l3 3M1332.500 946.500l-3 3"/></g>
<path d="M1351 934l4.500 10h-9z" stroke="#fff" stroke-width="1.500"/><path d="M1355.500 937l4.500 10h-9z" stroke="#f00000" stroke-width="1.500"/>
<path d="M1377.500 934.500h8v4h-8zM1374 947.500v-5l4-4h7l4 4v5zM1374 942.500h15" stroke="#fff" stroke-width="1.300"/><path d="M1379 943.500h5l-2.500 3z" fill="#fff"/><path d="M1379.500 936.500h4" stroke="#fff"/>
<rect x="1401.5" y="933.500" width="15" height="13.500" stroke="#fff" stroke-width="1.300"/><path d="M1401.5 940.500h9v6.500M1410.5 940.500l6-7" stroke="#fff" stroke-width="1.200"/><path d="M1401 947.500l16-15" stroke="#f00000" stroke-width="1.300"/><rect x="1400" y="932" width="3" height="3" fill="#999" stroke="#ddd" stroke-width=".5"/><rect x="1415" y="932" width="3" height="3" fill="#999" stroke="#ddd" stroke-width=".5"/><rect x="1415" y="946" width="3" height="3" fill="#999" stroke="#ddd" stroke-width=".5"/><rect x="1400" y="946" width="3" height="3" fill="#999" stroke="#ddd" stroke-width=".5"/><rect x="1400" y="939" width="3" height="3" fill="#6aa5f8"/><rect x="1409" y="939" width="3" height="3" fill="#6aa5f8"/><rect x="1409" y="946" width="3" height="3" fill="#6aa5f8"/>
<rect x="1430" y="933.500" width="14.500" height="13.500" stroke="#fff" stroke-width="1.500"/>
<rect x="1428" y="932" width="3.500" height="3.500" fill="#6aa5f8"/>
<rect x="1443" y="932" width="3.500" height="3.500" fill="#6aa5f8"/>
<rect x="1428" y="946" width="3.500" height="3.500" fill="#6aa5f8"/>
<rect x="1443" y="946" width="3.500" height="3.500" fill="#6aa5f8"/>
<rect x="1435.500" y="938.500" width="3.500" height="3.500" fill="#ffee00"/><circle cx="1437.200" cy="936" r="1.500" fill="#f00"/><circle cx="1437.200" cy="944.500" r="1.500" fill="#f00"/><circle cx="1433" cy="940.200" r="1.500" fill="#f00"/><circle cx="1441.500" cy="940.200" r="1.500" fill="#f00"/>
<rect x="1457.500" y="937.500" width="11" height="10" stroke="#8c8c8c" stroke-width="1.300"/><path d="M1462 940c0-4 3-6 8-6" stroke="#8c8c8c" stroke-width="1.200"/><rect x="1471" y="932" width="3" height="3" fill="#8c8c8c"/><rect x="1461" y="940" width="3.500" height="3.500" fill="#8c8c8c"/><rect x="1456" y="936" width="3" height="3" fill="#8c8c8c"/><rect x="1467" y="936" width="3" height="3" fill="#8c8c8c"/><rect x="1456" y="946" width="3" height="3" fill="#8c8c8c"/><rect x="1467" y="946" width="3" height="3" fill="#8c8c8c"/>
<rect x="1485.500" y="937.500" width="11" height="10" stroke="#8c8c8c" stroke-width="1.300"/><path d="M1489 942l9-8M1499 932v9M1497 934h4M1497 938h4" stroke="#8c8c8c" stroke-width="1.200"/><rect x="1488" y="940" width="3.500" height="3.500" fill="#8c8c8c"/><rect x="1484" y="936" width="3" height="3" fill="#8c8c8c"/><rect x="1495" y="936" width="3" height="3" fill="#8c8c8c"/><rect x="1484" y="946" width="3" height="3" fill="#8c8c8c"/><rect x="1495" y="946" width="3" height="3" fill="#8c8c8c"/>
<path d="M1516 933h8l-3 4h-8z" stroke="#fff" stroke-width="1.300"/><path d="M1523 935c3 0 5 2 5 5" stroke="#f00" stroke-width="1.600"/><path d="M1525.500 938.500h5l-2.500 3z" fill="#f00"/><rect x="1520.500" y="941.500" width="7.500" height="6" stroke="#fff" stroke-width="1.300"/><path d="M1524 944.500h5" stroke="#6aa5f8" stroke-width="1.200"/>
<path d="M1549 933h8l-3 4h-8z" stroke="#fff" stroke-width="1.300"/><path d="M1548 942c3 0 6-1 8-4" stroke="#f00" stroke-width="1.600"/><path d="M1553.500 939.500l4.500-3l-.5 5z" fill="#f00"/><rect x="1540.500" y="941.500" width="7.500" height="6" stroke="#fff" stroke-width="1.300"/><path d="M1544 944.500h5" stroke="#6aa5f8" stroke-width="1.200"/>
<rect x="1569.500" y="939.500" width="9" height="8" stroke="#8c8c8c" stroke-width="1.300"/><path d="M1574 934v8h8" stroke="#8c8c8c" stroke-width="1.200"/><rect x="1572.500" y="932" width="3" height="3" fill="#8c8c8c"/><rect x="1572.500" y="941" width="3" height="3" fill="#8c8c8c"/><path d="M1580.500 937v-2a2 2 0 0 1 4 0v2" stroke="#8c8c8c" stroke-width="1.200"/><rect x="1579.500" y="936.500" width="6" height="5" fill="#8c8c8c"/><rect x="1580" y="943" width="3" height="3" fill="#8c8c8c"/>
<path d="M1598 941l14-7" stroke="#f00" stroke-width="1.800"/><path d="M1612 934v13h-14v-6" stroke="#fff" stroke-width="1.600"/>
<rect x="1596" y="939" width="3.500" height="3.500" fill="#6aa5f8"/>
<rect x="1610" y="932" width="3.500" height="3.500" fill="#6aa5f8"/>
<rect x="1610" y="945.5" width="3.500" height="3.500" fill="#6aa5f8"/>
<rect x="1596" y="945.5" width="3.500" height="3.500" fill="#6aa5f8"/>
<rect x="1625.500" y="933.500" width="15" height="13.500" stroke="#fff" stroke-width="1.300"/><rect x="1629" y="937" width="8" height="7" stroke="#fff" stroke-width="1.100"/><path d="M1625 947.500l16-15" stroke="#f00000" stroke-width="1.300"/><rect x="1624" y="932" width="3" height="3" fill="#999" stroke="#ddd" stroke-width=".5"/><rect x="1639" y="932" width="3" height="3" fill="#999" stroke="#ddd" stroke-width=".5"/><rect x="1639" y="946" width="3" height="3" fill="#999" stroke="#ddd" stroke-width=".5"/><rect x="1624" y="946" width="3" height="3" fill="#999" stroke="#ddd" stroke-width=".5"/><rect x="1628" y="936" width="3" height="3" fill="#6aa5f8"/><rect x="1635" y="936" width="3" height="3" fill="#6aa5f8"/><rect x="1628" y="942.5" width="3" height="3" fill="#6aa5f8"/><rect x="1635" y="942.5" width="3" height="3" fill="#6aa5f8"/>
</svg>
<!-- ===== LAYER DIALOG ===== -->
<style>
#ld{position:absolute;left:318px;top:237px;width:769px;height:421px;background:#555;border:3px solid #707070;border-right-color:#3e3e3e;border-bottom-color:#3e3e3e}
#ldt{position:absolute;left:321px;top:240px;width:762px;height:20px;background:#383838;border-top:1px solid #222;border-left:1px solid #222}
.lr{position:absolute;white-space:nowrap;font-size:12px;line-height:16px;color:#fff}
</style>
<div id="ld"></div><div id="ldt"></div>
<div class="t" style="left:325px;top:243px;font-size:12px">Layer</div>
<svg style="left:1054px;top:242px" width="30" height="14" viewBox="0 0 30 14"><path d="M4.500 2.500h3v5h-3zM3 7.500h6M6 7.500v4" stroke="#fff" stroke-width="1.200" fill="none"/><path d="M7 2.500v5" stroke="#fff" stroke-width="1.500"/><path d="M18 2.500l7 7M25 2.500l-7 7" stroke="#fff" stroke-width="1.500"/></svg>
<div class="abs" style="left:325px;top:299px;width:150px;height:354px;background:#2a2a2a;border:1px solid #c8c8c8;border-top-color:#888;border-left-color:#888"></div>
<div class="abs" style="left:364px;top:300px;width:55px;height:17px;background:#86a7d9"></div>
<div class="t" style="left:366px;top:302px;font-size:12px;letter-spacing:-.35px;color:#111">Layer (15)</div>
<div class="t" style="left:385px;top:320px;font-size:12px;letter-spacing:-.32px">LayersTemplates</div>
<div class="t" style="left:385px;top:338px;font-size:12px;letter-spacing:-.35px">LayersFilters</div>
<svg style="left:325px;top:299px" width="150" height="60" viewBox="325 299 150 60">
<rect x="334.500" y="305.500" width="9" height="9" fill="#e8e8e8" stroke="#999"/><path d="M336.500 310h5" stroke="#3a4a9a" stroke-width="1.200"/>
<path d="M344 310.500h4M357.500 318v29M357.500 327.500h9M357.500 345.500h9" stroke="#ccc" stroke-dasharray="1 1"/>
<rect x="348" y="301" width="16" height="16" fill="#fff"/>
<g transform="translate(349 302)"><path d="M3 2h7l3 2.500h-7z" fill="#00e0e0" stroke="#000" stroke-width=".6"/><path d="M2 5.500h7l3 2.500h-7z" fill="#e8e800" stroke="#000" stroke-width=".6"/><path d="M1 9h7l3 2.500h-7z" fill="#00c000" stroke="#000" stroke-width=".6"/><path d="M3 13h8" stroke="#888"/></g>
<rect x="367" y="319" width="16" height="16" fill="#fff"/>
<g transform="translate(367 319)"><path d="M4 1.500c-2 0-2 1-2 3s0 3-1.500 3.500c1.500 .5 1.500 1.500 1.500 3.500s0 3 2 3M12 1.500c2 0 2 1 2 3s0 3 1.500 3.500c-1.500 .5-1.500 1.500-1.500 3.500s0 3-2 3" stroke="#000" fill="none" stroke-width="1.200"/><path d="M5 3h4l2 2h-4z" fill="#0000d0"/><path d="M5 6h4l2 2h-4z" fill="#d0d000"/><path d="M6 9h4l2 2h-4z" fill="#00b000"/><path d="M7 11.500h4l1 1.500h-4z" fill="#d00000"/></g>
<rect x="367" y="337" width="16" height="16" fill="#fff"/>
<g transform="translate(367 337)"><path d="M3 2h9l3 3h-9z" fill="#333"/><path d="M1 5.500h12l-4.500 5v4l-3-1.500v-2.500z" fill="#fff" stroke="#000"/><path d="M9 8h5l2 2h-5zM9 11h5l2 2h-5z" fill="#555"/></g>
</svg>
<div class="abs" style="left:479px;top:299px;width:604px;height:337px;background:#2a2a2a;border-left:1px solid #888;border-top:1px solid #888"></div>
<div class="abs" style="left:480px;top:300px;width:603px;height:23px;background:#555;border-bottom:1px solid #2a2a2a"></div>
<div class="abs" style="left:480px;top:300px;width:120px;height:23px;background:#585858;border-top:1px solid #6e6e6e;border-left:1px solid #6e6e6e;border-right:1px solid #3a3a3a;border-bottom:1px solid #3a3a3a"></div>
<div class="abs" style="left:601px;top:300px;width:25px;height:23px;background:#585858;border-top:1px solid #6e6e6e;border-left:1px solid #6e6e6e;border-right:1px solid #3a3a3a;border-bottom:1px solid #3a3a3a"></div>
<div class="abs" style="left:627px;top:300px;width:25px;height:23px;background:#585858;border-top:1px solid #6e6e6e;border-left:1px solid #6e6e6e;border-right:1px solid #3a3a3a;border-bottom:1px solid #3a3a3a"></div>
<div class="abs" style="left:653px;top:300px;width:25px;height:23px;background:#585858;border-top:1px solid #6e6e6e;border-left:1px solid #6e6e6e;border-right:1px solid #3a3a3a;border-bottom:1px solid #3a3a3a"></div>
<div class="abs" style="left:679px;top:300px;width:25px;height:23px;background:#585858;border-top:1px solid #6e6e6e;border-left:1px solid #6e6e6e;border-right:1px solid #3a3a3a;border-bottom:1px solid #3a3a3a"></div>
<div class="abs" style="left:705px;top:300px;width:79px;height:23px;background:#585858;border-top:1px solid #6e6e6e;border-left:1px solid #6e6e6e;border-right:1px solid #3a3a3a;border-bottom:1px solid #3a3a3a"></div>
<div class="abs" style="left:785px;top:300px;width:79px;height:23px;background:#585858;border-top:1px solid #6e6e6e;border-left:1px solid #6e6e6e;border-right:1px solid #3a3a3a;border-bottom:1px solid #3a3a3a"></div>
<div class="abs" style="left:865px;top:300px;width:59px;height:23px;background:#585858;border-top:1px solid #6e6e6e;border-left:1px solid #6e6e6e;border-right:1px solid #3a3a3a;border-bottom:1px solid #3a3a3a"></div>
<div class="abs" style="left:925px;top:300px;width:79px;height:23px;background:#585858;border-top:1px solid #6e6e6e;border-left:1px solid #6e6e6e;border-right:1px solid #3a3a3a;border-bottom:1px solid #3a3a3a"></div>
<div class="abs" style="left:1005px;top:300px;width:25px;height:23px;background:#585858;border-top:1px solid #6e6e6e;border-left:1px solid #6e6e6e;border-right:1px solid #3a3a3a;border-bottom:1px solid #3a3a3a"></div>
<div class="abs" style="left:1031px;top:300px;width:25px;height:23px;background:#585858;border-top:1px solid #6e6e6e;border-left:1px solid #6e6e6e;border-right:1px solid #3a3a3a;border-bottom:1px solid #3a3a3a"></div>
<div class="abs" style="left:1057px;top:300px;width:25px;height:23px;background:#585858;border-top:1px solid #6e6e6e;border-left:1px solid #6e6e6e;border-right:1px solid #3a3a3a;border-bottom:1px solid #3a3a3a"></div>
<div class="lr" style="left:486px;top:304px">Name</div>
<div class="lr" style="left:730px;top:304px">Line St...</div>
<div class="lr" style="left:810px;top:304px">Pen Wi...</div>
<div class="lr" style="left:890px;top:304px">Or...</div>
<div class="lr" style="left:950px;top:304px">Print St...</div>
<svg style="left:0;top:0" width="1680" height="985" viewBox="0 0 1680 985">
<defs>
<g id="lyr"><rect x="-1" y="0" width="16" height="15" fill="#000"/><path d="M2 1.500h4.500l3 3h-4.500z" fill="#00f0f0"/><path d="M2 4.800h4.500l3 3h-4.500z" fill="#f0f000"/><path d="M1.500 8h4.500l3 3h-4.500z" fill="#00e000"/><path d="M1 9.500l4 3.500h8.500" stroke="#ddd" stroke-width="1.300" fill="none"/><path d="M9.500 6h3M9.500 9h3" stroke="#bbb" stroke-width="1.100"/></g>
<g id="eye"><ellipse cx="0" cy="0" rx="6.500" ry="4" fill="#9a9a9a" stroke="#fff" stroke-width="1.400"/><rect x="-2.500" y="-2" width="5" height="4" rx="1" fill="#1414f0"/><rect x="-1" y="-1" width="2.500" height="2" fill="#30b0e0"/></g>
<g id="chk"><path d="M-4.500 -1.500l3 4l6.500-8.500" stroke="#fff" stroke-width="3.600" fill="none"/><path d="M-4.500 -1.500l3 4l6.500-8.500" stroke="#0a7a0a" stroke-width="1.900" fill="none"/></g>
</defs>
<rect x="606" y="305" width="14" height="14" fill="#000"/><use href="#chk" x="612.500" y="313.500" transform="translate(0 0)"/>
<rect x="632" y="305" width="14" height="14" fill="#000"/><use href="#eye" x="639" y="312"/>
<rect x="658" y="305" width="14" height="14" fill="#000"/><path d="M662.500 311v-1.500a2.500 2.500 0 0 1 5 0v1.500" stroke="#fff" fill="none" stroke-width="1.200"/><rect x="660.500" y="310.500" width="9" height="6.500" rx="1" fill="#6a6a00" stroke="#fff" stroke-width="1.100"/><rect x="662.500" y="312.500" width="5" height="2.500" fill="#c8c800"/><rect x="663.300" y="313.200" width="1" height="1" fill="#000"/><rect x="665.700" y="313.200" width="1" height="1" fill="#000"/>
<rect x="684" y="305" width="14" height="14" fill="#000"/><path d="M691 306.500c3 0 5.500 2 5.500 4.500c0 1-1 1.500-2 1.500s-1.500 1-1 2s0 2.500-2.500 2.500c-3 0-5-2.500-5-5.500s2-5 5-5z" fill="#f0e840"/><circle cx="690" cy="308.500" r="1.200" fill="#e00000"/><circle cx="688.500" cy="311.500" r="1.200" fill="#008000"/><circle cx="690" cy="314.500" r="1.200" fill="#0000e0"/><circle cx="693" cy="315" r="1.100" fill="#c000c0"/><circle cx="694" cy="309" r="1.100" fill="#fff"/>
<rect x="710" y="305" width="14" height="14" fill="#000"/><path d="M710.500 310v4M710.500 312h13" stroke="#fff" stroke-width="3"/><path d="M712 312h3M716.500 312h1.500M719.500 312h3" stroke="#000090" stroke-width="1.400"/>
<rect x="790.500" y="305.500" width="13" height="13" fill="#fff" stroke="#000" stroke-width="1"/><path d="M792.500 308h9" stroke="#000090" stroke-width="1.200"/><path d="M792.500 311.500h9" stroke="#000090" stroke-width="2"/><path d="M792.500 315.500h9" stroke="#000090" stroke-width="2.600"/>
<rect x="870" y="305" width="14" height="14" fill="#000"/><rect x="872.500" y="306.500" width="4" height="5" fill="#009090" stroke="#fff" stroke-width="1"/><rect x="877.500" y="311.500" width="4" height="5" fill="#009090" stroke="#fff" stroke-width="1"/><path d="M875 313h2.500v-2.500h2" stroke="#f0f000" stroke-width="1" fill="none"/>
<rect x="930" y="305" width="14" height="14" fill="#000"/><path d="M932 312l3-5h5l2 5zM931 312.500h12v3h-12z" stroke="#fff" fill="none" stroke-width="1"/><path d="M934 310h5" stroke="#fff" stroke-width=".8"/><path d="M931.500 317.500h4M937 317.500h6" stroke="#fff" stroke-width="1.300"/>
<rect x="1010.500" y="305.500" width="13" height="12" fill="#fff" stroke="#000"/><path d="M1012.500 311.500c2-3 7-3 9 0c-2 3-7 3-9 0z" fill="#fff" stroke="#000" stroke-width=".8"/><circle cx="1017" cy="311.500" r="1.600" fill="#2020c0"/>
<rect x="1036.500" y="305.500" width="13" height="12" fill="#fff" stroke="#000"/><rect x="1039" y="307.500" width="3.500" height="3.500" fill="#e00000"/><rect x="1044" y="307.500" width="3.500" height="3.500" fill="#0000e0"/><rect x="1039" y="312.500" width="3.500" height="3.500" fill="#00a000"/><rect x="1044" y="312.500" width="3.500" height="3.500" fill="#e0c000"/>
<rect x="1062.500" y="305.500" width="13" height="12" fill="#fff" stroke="#000"/><path d="M1064.500 311.500h3.500M1069.500 311.500h4" stroke="#000" stroke-width="1.600"/>
<path d="M480 340.5H1082M480 357.5H1082M480 374.5H1082M480 391.5H1082M480 408.5H1082M480 425.5H1082M480 442.5H1082M480 459.5H1082M480 476.5H1082M480 493.5H1082M480 510.5H1082M480 527.5H1082M480 544.5H1082M480 561.5H1082M480 578.5H1082M480 595.5H1082M480 612.5H1082M480 629.5H1082" stroke="#cfcfcf" stroke-width="1" shape-rendering="crispEdges"/>
<path d="M600.5 323V636M626.5 323V636M652.5 323V636M678.5 323V636M704.5 323V636M784.5 323V636M864.5 323V636M924.5 323V636M1004.5 323V636M1030.5 323V636M1056.5 323V636M1082.5 323V636" stroke="#cfcfcf" stroke-width="1" shape-rendering="crispEdges"/>
<use href="#lyr" x="481" y="324"/>
<use href="#eye" x="638.500" y="331.5"/>
<rect x="680.500" y="325.5" width="21" height="13" fill="#000" stroke="#7a7a7a"/>
<path d="M707 331.5H780" stroke="#fff" stroke-width="1" shape-rendering="crispEdges"/>
<use href="#lyr" x="481" y="341"/>
<use href="#eye" x="638.500" y="348.5"/>
<rect x="680.500" y="342.5" width="21" height="13" fill="#000" stroke="#7a7a7a"/>
<path d="M707 348.5H780" stroke="#fff" stroke-width="1" shape-rendering="crispEdges"/>
<use href="#lyr" x="481" y="358"/>
<use href="#eye" x="638.500" y="365.5"/>
<rect x="680.500" y="359.5" width="21" height="13" fill="#000" stroke="#7a7a7a"/>
<path d="M707 365.5H780" stroke="#fff" stroke-width="1" shape-rendering="crispEdges"/>
<use href="#lyr" x="481" y="375"/>
<use href="#eye" x="638.500" y="382.5"/>
<rect x="680.500" y="376.5" width="21" height="13" fill="#000" stroke="#7a7a7a"/>
<path d="M707 382.5H780" stroke="#fff" stroke-width="1" shape-rendering="crispEdges"/>
<use href="#lyr" x="481" y="392"/>
<use href="#eye" x="638.500" y="399.5"/>
<rect x="680.500" y="393.5" width="21" height="13" fill="#000" stroke="#7a7a7a"/>
<path d="M707 399.5H780" stroke="#fff" stroke-width="1" shape-rendering="crispEdges"/>
<use href="#lyr" x="481" y="409"/>
<use href="#eye" x="638.500" y="416.5"/>
<rect x="680.500" y="410.5" width="21" height="13" fill="#000" stroke="#7a7a7a"/>
<path d="M707 416.5H780" stroke="#fff" stroke-width="1" shape-rendering="crispEdges"/>
<use href="#lyr" x="481" y="426"/>
<use href="#eye" x="638.500" y="433.5"/>
<rect x="680.500" y="427.5" width="21" height="13" fill="#000" stroke="#7a7a7a"/>
<path d="M707 433.5H780" stroke="#fff" stroke-width="1" shape-rendering="crispEdges"/>
<use href="#lyr" x="481" y="443"/>
<use href="#eye" x="638.500" y="450.5"/>
<rect x="680.500" y="444.5" width="21" height="13" fill="#000" stroke="#7a7a7a"/>
<path d="M707 450.5H780" stroke="#fff" stroke-width="1" shape-rendering="crispEdges"/>
<use href="#lyr" x="481" y="460"/>
<use href="#eye" x="638.500" y="467.5"/>
<rect x="680.500" y="461.5" width="21" height="13" fill="#000" stroke="#7a7a7a"/>
<path d="M707 467.5H780" stroke="#fff" stroke-width="1" shape-rendering="crispEdges"/>
<use href="#lyr" x="481" y="477"/>
<use href="#eye" x="638.500" y="484.5"/>
<rect x="680.500" y="478.5" width="21" height="13" fill="#000" stroke="#7a7a7a"/>
<path d="M707 484.5H780" stroke="#fff" stroke-width="1" shape-rendering="crispEdges"/>
<use href="#lyr" x="481" y="494"/>
<use href="#eye" x="638.500" y="501.5"/>
<rect x="680.500" y="495.5" width="21" height="13" fill="#000" stroke="#7a7a7a"/>
<path d="M707 501.5H780" stroke="#fff" stroke-width="1" shape-rendering="crispEdges"/>
<use href="#lyr" x="481" y="511"/>
<use href="#eye" x="638.500" y="518.5"/>
<rect x="680.500" y="512.5" width="21" height="13" fill="#000" stroke="#7a7a7a"/>
<path d="M707 518.5H780" stroke="#fff" stroke-width="1" shape-rendering="crispEdges"/>
<use href="#lyr" x="481" y="528"/>
<use href="#eye" x="638.500" y="535.5"/>
<rect x="680.500" y="529.5" width="21" height="13" fill="#000" stroke="#7a7a7a"/>
<path d="M707 535.5H780" stroke="#fff" stroke-width="1" shape-rendering="crispEdges"/>
<use href="#lyr" x="481" y="545"/>
<use href="#eye" x="638.500" y="552.5"/>
<rect x="680.500" y="546.5" width="21" height="13" fill="#000" stroke="#7a7a7a"/>
<path d="M707 552.5H780" stroke="#fff" stroke-width="1" shape-rendering="crispEdges"/>
<use href="#lyr" x="481" y="562"/>
<use href="#eye" x="638.500" y="569.5"/>
<rect x="680.500" y="563.5" width="21" height="13" fill="#000" stroke="#7a7a7a"/>
<path d="M707 569.5H780" stroke="#fff" stroke-width="1" shape-rendering="crispEdges"/>
<use href="#chk" x="612" y="333"/>
</svg>
<div class="lr" style="left:500px;top:324px">0</div>
<div class="lr" style="left:785px;top:324px">0 in</div>
<div class="lr" style="left:865px;top:324px">0</div>
<div class="lr" style="left:925px;top:324px">Normal</div>
<div class="lr" style="left:1012px;top:324px">...</div>
<div class="lr" style="left:1038px;top:324px">...</div>
<div class="lr" style="left:500px;top:341px">Electrical</div>
<div class="lr" style="left:785px;top:341px">0 in</div>
<div class="lr" style="left:865px;top:341px">0</div>
<div class="lr" style="left:925px;top:341px">Normal</div>
<div class="lr" style="left:1012px;top:341px">...</div>
<div class="lr" style="left:1038px;top:341px">...</div>
<div class="lr" style="left:500px;top:358px">Doors</div>
<div class="lr" style="left:785px;top:358px">0 in</div>
<div class="lr" style="left:865px;top:358px">0</div>
<div class="lr" style="left:925px;top:358px">Normal</div>
<div class="lr" style="left:1012px;top:358px">...</div>
<div class="lr" style="left:1038px;top:358px">...</div>
<div class="lr" style="left:500px;top:375px">Dimensions</div>
<div class="lr" style="left:785px;top:375px">0 in</div>
<div class="lr" style="left:865px;top:375px">0</div>
<div class="lr" style="left:925px;top:375px">Normal</div>
<div class="lr" style="left:1012px;top:375px">...</div>
<div class="lr" style="left:1038px;top:375px">...</div>
<div class="lr" style="left:500px;top:392px">Schedules</div>
<div class="lr" style="left:785px;top:392px">0 in</div>
<div class="lr" style="left:865px;top:392px">0</div>
<div class="lr" style="left:925px;top:392px">Normal</div>
<div class="lr" style="left:1012px;top:392px">...</div>
<div class="lr" style="left:1038px;top:392px">...</div>
<div class="lr" style="left:500px;top:409px">Appliances</div>
<div class="lr" style="left:785px;top:409px">0 in</div>
<div class="lr" style="left:865px;top:409px">0</div>
<div class="lr" style="left:925px;top:409px">Normal</div>
<div class="lr" style="left:1012px;top:409px">...</div>
<div class="lr" style="left:1038px;top:409px">...</div>
<div class="lr" style="left:500px;top:426px">Cabinets</div>
<div class="lr" style="left:785px;top:426px">0 in</div>
<div class="lr" style="left:865px;top:426px">0</div>
<div class="lr" style="left:925px;top:426px">Normal</div>
<div class="lr" style="left:1012px;top:426px">...</div>
<div class="lr" style="left:1038px;top:426px">...</div>
<div class="lr" style="left:500px;top:443px">Plumbing</div>
<div class="lr" style="left:785px;top:443px">0 in</div>
<div class="lr" style="left:865px;top:443px">0</div>
<div class="lr" style="left:925px;top:443px">Normal</div>
<div class="lr" style="left:1012px;top:443px">...</div>
<div class="lr" style="left:1038px;top:443px">...</div>
<div class="lr" style="left:500px;top:460px">Walls</div>
<div class="lr" style="left:785px;top:460px">0 in</div>
<div class="lr" style="left:865px;top:460px">0</div>
<div class="lr" style="left:925px;top:460px">Normal</div>
<div class="lr" style="left:1012px;top:460px">...</div>
<div class="lr" style="left:1038px;top:460px">...</div>
<div class="lr" style="left:500px;top:477px">10</div>
<div class="lr" style="left:785px;top:477px">0 in</div>
<div class="lr" style="left:865px;top:477px">0</div>
<div class="lr" style="left:925px;top:477px">Normal</div>
<div class="lr" style="left:1012px;top:477px">...</div>
<div class="lr" style="left:1038px;top:477px">...</div>
<div class="abs" style="left:496px;top:494px;width:104px;height:16px;background:#7b96bb"></div>
<div class="lr" style="left:500px;top:494px;color:#1a1a1a">Wood</div>
<div class="lr" style="left:785px;top:494px">0 in</div>
<div class="lr" style="left:865px;top:494px">0</div>
<div class="lr" style="left:925px;top:494px">Normal</div>
<div class="lr" style="left:1012px;top:494px">...</div>
<div class="lr" style="left:1038px;top:494px">...</div>
<div class="lr" style="left:500px;top:511px">Windows</div>
<div class="lr" style="left:785px;top:511px">0 in</div>
<div class="lr" style="left:865px;top:511px">0</div>
<div class="lr" style="left:925px;top:511px">Normal</div>
<div class="lr" style="left:1012px;top:511px">...</div>
<div class="lr" style="left:1038px;top:511px">...</div>
<div class="lr" style="left:500px;top:528px">Title block</div>
<div class="lr" style="left:785px;top:528px">0 in</div>
<div class="lr" style="left:865px;top:528px">0</div>
<div class="lr" style="left:925px;top:528px">Normal</div>
<div class="lr" style="left:1012px;top:528px">...</div>
<div class="lr" style="left:1038px;top:528px">...</div>
<div class="lr" style="left:500px;top:545px">Text</div>
<div class="lr" style="left:785px;top:545px">0 in</div>
<div class="lr" style="left:865px;top:545px">0</div>
<div class="lr" style="left:925px;top:545px">Normal</div>
<div class="lr" style="left:1012px;top:545px">...</div>
<div class="lr" style="left:1038px;top:545px">...</div>
<div class="lr" style="left:500px;top:562px">Concrete</div>
<div class="lr" style="left:785px;top:562px">0 in</div>
<div class="lr" style="left:865px;top:562px">0</div>
<div class="lr" style="left:925px;top:562px">Normal</div>
<div class="lr" style="left:1012px;top:562px">...</div>
<div class="lr" style="left:1038px;top:562px">...</div>
<div class="abs" style="left:480px;top:636px;width:603px;height:17px;background:#c8c8c8"></div>
<div class="abs" style="left:480px;top:636px;width:17px;height:17px;background:#f0f0f0"></div>
<svg style="left:483px;top:639px" width="10" height="11" viewBox="0 0 10 11"><path d="M7.500 1.500l-4.500 4l4.500 4" stroke="#555" stroke-width="1.800" fill="none"/></svg>
<!--LAYER_TB_ICONS-->
<svg style="left:321px;top:262px" width="600" height="36" viewBox="321 262 600 36" fill="none">
<defs>
<g id="eyeY"><path d="M-6.500 0c3-4 10-4 13 0c-3 4-10 4-13 0z" fill="#fff" stroke="#000" stroke-width=".5"/><circle cx="0" cy="0" r="2.300" fill="#000"/><path d="M-.5 -2l2 2l-2 2z" fill="#ffee00"/><rect x="-2" y="-2" width="1.500" height="1.500" fill="#ff0000"/><path d="M-4 3.500h8" stroke="#999" stroke-width="1"/></g>
<g id="lockB"><path d="M-1.500 -1v-1.500a1.500 1.500 0 0 1 3 0v1.500" stroke="#fff" stroke-width="1.200" fill="none"/><rect x="-3" y="-.5" width="6" height="5.500" fill="#1a1ae0" stroke="#fff" stroke-width="1"/><rect x="-.7" y="1.500" width="1.400" height="1.400" fill="#fff"/></g>
<g id="bwsq"><rect x="0" y="0" width="9.500" height="10" fill="#fff"/><path d="M1.500 1.500h6.500v2.500c-3 0-4 1.500-4 4.500h-2.500z" fill="#000"/></g>
<g id="bdia"><path d="M0 -5l5 5l-5 5l-5-5z" stroke="#6aa5f8" stroke-width="1.800"/><rect x="-7" y="-7" width="2.500" height="2.500" fill="#6aa5f8"/><rect x="4.500" y="-7" width="2.500" height="2.500" fill="#6aa5f8"/><rect x="-7" y="4.500" width="2.500" height="2.500" fill="#6aa5f8"/><rect x="4.500" y="4.500" width="2.500" height="2.500" fill="#6aa5f8"/></g>
</defs>
<rect x="332" y="270" width="17" height="20" fill="#4a4a4a" stroke="#b4b4b4" stroke-width="1.600"/>
<path d="M344.500 277a4.500 4.500 0 0 0 -8 -1.500" stroke="#00a800" stroke-width="2.200"/><path d="M340.500 272l5 1.500l-2.500 4.500z" fill="#00a800"/><path d="M336.500 283a4.500 4.500 0 0 0 8 1.500" stroke="#00a800" stroke-width="2.200"/><path d="M340.500 288l-5-1.500l2.500-4.500z" fill="#00a800"/>
<path d="M364.500 277h12l-4.500 5.500v5h-3v-5z" stroke="#fff" stroke-width="1.500" fill="#555"/><path d="M379.0 274.5L386.0 274.5M380.0 272.0L385.0 277.0M382.5 271.0L382.5 278.0M385.0 272.0L380.0 277.0" stroke="#6aa5f8" stroke-width="1.1"/><path d="M379.0 282.5L386.0 282.5M380.0 280.0L385.0 285.0M382.5 279.0L382.5 286.0M385.0 280.0L380.0 285.0" stroke="#6aa5f8" stroke-width="1.1"/>
<path d="M393.500 281h11l-4 4.500v4h-3v-4z" stroke="#727272" stroke-width="1.100"/><path d="M398 276l5-5h9M403 279l4-3.500h5M398 276l5 3" stroke="#727272" stroke-width="1.100"/><rect x="411" y="270" width="3" height="7" fill="#727272"/>
<rect x="426.500" y="270.500" width="16" height="14" rx="1" fill="#ffff80" stroke="#e8e060" stroke-width="1"/><rect x="429.500" y="273.500" width="10" height="8" fill="#ff0000" stroke="#000" stroke-width="1.200"/>
<path d="M424 279h9l4 3h-9z" fill="#0000ff" stroke="#fff" stroke-width=".8"/><path d="M422 282.500h11l4 2h-11z" fill="#fff"/><path d="M425 285h9l4 3h-9z" fill="#ff00ff" stroke="#fff" stroke-width=".8"/><path d="M424 288.500h11l3 1.500h-11z" fill="#fff"/>
<path d="M462 271c-3 0-3 1.500-3 4s0 4-2 4.500c2 .5 2 2 2 4.500s0 4 3 4M475 271c3 0 3 1.500 3 4s0 4 2 4.500c-2 .5-2 2-2 4.500s0 4-3 4" stroke="#fff" stroke-width="1.500"/><path d="M462.0 275.5L469.0 275.5M463.0 273.0L468.0 278.0M465.5 272.0L465.5 279.0M468.0 273.0L463.0 278.0" stroke="#6aa5f8" stroke-width="1.1"/><path d="M468.0 284.0L475.0 284.0M469.0 281.5L474.0 286.5M471.5 280.5L471.5 287.5M474.0 281.5L469.0 286.5" stroke="#6aa5f8" stroke-width="1.1"/>
<path d="M499.3 274.0L509.7 274.0M500.8 270.3L508.2 277.7M504.5 268.8L504.5 279.2M508.2 270.3L500.8 277.7" stroke="#ffff30" stroke-width="1.8"/><use href="#bdia" x="516" y="283.500"/>
<path d="M529 271h6.500l4.500 5.500l4.500-5.500h6.500l-7.500 8.500l7.500 8.500h-6.500l-4.500-5.500l-4.500 5.500h-6.500l7.500-8.500z" fill="#ff0000"/>
<path d="M559.500 279.500l6 5l13-11" stroke="#00e000" stroke-width="3.200"/>
<use href="#bdia" x="599" y="275.500"/><path d="M606.500 277v11.500l2.800-2.500l2.200 4.500l1.800-.8l-2.100-4.500h3.600z" fill="#777" stroke="#fff" stroke-width="1.100"/>
<path d="M628 274h-5v15.500h17v-12" stroke="#fff" stroke-width="1.800"/><path d="M626 281h4M632 281h6M626 285h4M632 285h6" stroke="#fff" stroke-width="1.600"/><path d="M628 275l6-5h7l-1 5c-2 1-4 2-6 2z" fill="#666" stroke="#fff" stroke-width="1"/><path d="M632 276l3-4M635 276l3-4" stroke="#fff" stroke-width=".8"/><rect x="641.500" y="269.500" width="2" height="7" fill="#6aa5f8"/>
<use href="#eyeY" x="668.500" y="275"/><use href="#eyeY" x="668.500" y="284"/>
<use href="#bwsq" x="693" y="269"/><use href="#eyeY" x="697.500" y="285"/>
<path d="M719 279.500c3.500-4.500 11.500-4.500 15 0c-3.500 4.500-11.500 4.500-15 0z" fill="#fff" stroke="#000" stroke-width=".5"/><ellipse cx="726.500" cy="279.500" rx="4" ry="3.200" fill="#f0e000"/><circle cx="726.500" cy="279.500" r="1.500" fill="#000"/><rect x="726" y="277.500" width="1.500" height="1.500" fill="#fff"/>
<use href="#lockB" x="760.500" y="273"/><use href="#lockB" x="760.500" y="284"/>
<use href="#bwsq" x="786" y="269"/><use href="#lockB" x="790.500" y="284"/>
<path d="M815.500 277v-2a3 3 0 0 1 6 0v2" stroke="#fff" stroke-width="1.600"/><rect x="817" y="273.500" width="3" height="1.500" fill="#1a1ae0"/><rect x="813.500" y="276.500" width="10" height="9.500" fill="#fff"/><rect x="815" y="278" width="7" height="5.500" fill="#1a1ae0"/><rect x="817.500" y="279" width="2" height="3" fill="#fff"/>
<text x="846" y="286" font-family="Liberation Serif,serif" font-weight="bold" font-size="17" fill="#ffff70" stroke="none">L</text><path d="M855.5 277.5L863.5 277.5M857.5 274.0L861.5 281.0M861.5 274.0L857.5 281.0" stroke="#ffff30" stroke-width="1.5"/>
</svg>
<!-- ===== COLOR DIALOG ===== -->
<style>
#cd{position:absolute;left:686px;top:579px;width:483px;height:370px;background:#575757;box-shadow:0 1px 11px 1px rgba(0,0,0,.5)}
.cl{position:absolute;white-space:nowrap;font-size:12.2px;line-height:15px;color:#fff;letter-spacing:-.2px}
.cin{position:absolute;width:37px;height:21px;background:#2a2a2a;border:1px solid #8a8a8a}
.csp{position:absolute;width:8px;height:19px;background:#5a5a5a;border:1px solid #4a4a4a}
.cth{position:absolute;width:7px;height:22px;background:#000;border:1px solid #777}
.cbar{position:absolute;height:16px;border-bottom:1px solid #777;border-right:1px solid #777}
.cbtn{position:absolute;height:24px;background:#2a2a2a;border:2px solid;border-color:#777 #3a3a3a #3a3a3a #777;text-align:center;font-size:12.2px;line-height:21px}
</style>
<div id="cd"></div>
<div class="abs" style="left:686px;top:579px;width:483px;height:6px;background:#fff"></div>
<div class="abs" style="left:689px;top:587px;width:71px;height:20px;background:#484848;border:1px solid #707070"></div>
<div class="abs" style="left:828px;top:586px;width:1px;height:22px;background:#333"></div>
<div class="abs" style="left:829px;top:607px;width:337px;height:1px;background:#707070"></div>
<div class="cl" style="left:694px;top:590px;color:#a8a8a8">Index Color</div>
<div class="cl" style="left:768px;top:590px">True Color</div>
<svg style="left:0;top:0" width="1680" height="985" viewBox="0 0 1680 985" shape-rendering="crispEdges">
<rect x="690" y="621" width="476" height="146" fill="#575757"/>
<rect x="690" y="621" width="476" height="117" fill="#ffffff"/>
<rect x="690" y="738" width="374" height="29" fill="#ffffff"/>
<rect x="691" y="622" width="33" height="28" fill="#000000"/>
<rect x="725" y="622" width="33" height="28" fill="#555555"/>
<rect x="759" y="622" width="33" height="28" fill="#a9a9a9"/>
<rect x="793" y="622" width="33" height="28" fill="#bebebe"/>
<rect x="827" y="622" width="33" height="28" fill="#ffffff"/>
<rect x="861" y="622" width="33" height="28" fill="#d8d8be"/>
<rect x="895" y="622" width="33" height="28" fill="#bed8d8"/>
<rect x="929" y="622" width="33" height="28" fill="#d8bed8"/>
<rect x="963" y="622" width="33" height="28" fill="#be8c8c"/>
<rect x="997" y="622" width="33" height="28" fill="#8cbe8c"/>
<rect x="1031" y="622" width="33" height="28" fill="#8c8cbe"/>
<rect x="1065" y="622" width="33" height="28" fill="#e9e9a9"/>
<rect x="1099" y="622" width="33" height="28" fill="#a9e9e9"/>
<rect x="1133" y="622" width="33" height="28" fill="#e9a9e9"/>
<rect x="691" y="651" width="33" height="28" fill="#6f4141"/>
<rect x="725" y="651" width="33" height="28" fill="#416f41"/>
<rect x="759" y="651" width="33" height="28" fill="#41416f"/>
<rect x="793" y="651" width="33" height="28" fill="#502d2d"/>
<rect x="827" y="651" width="33" height="28" fill="#50502d"/>
<rect x="861" y="651" width="33" height="28" fill="#2d502d"/>
<rect x="895" y="651" width="33" height="28" fill="#2d5050"/>
<rect x="929" y="651" width="33" height="28" fill="#2d2d50"/>
<rect x="963" y="651" width="33" height="28" fill="#502d50"/>
<rect x="997" y="651" width="33" height="28" fill="#a0a05f"/>
<rect x="1031" y="651" width="33" height="28" fill="#5fa0a0"/>
<rect x="1065" y="651" width="33" height="28" fill="#a05fa0"/>
<rect x="1099" y="651" width="33" height="28" fill="#dc9370"/>
<rect x="1133" y="651" width="33" height="28" fill="#dcdc70"/>
<rect x="691" y="680" width="33" height="28" fill="#93dc70"/>
<rect x="725" y="680" width="33" height="28" fill="#70dc93"/>
<rect x="759" y="680" width="33" height="28" fill="#70dcdc"/>
<rect x="793" y="680" width="33" height="28" fill="#7093dc"/>
<rect x="827" y="680" width="33" height="28" fill="#9370dc"/>
<rect x="861" y="680" width="33" height="28" fill="#dc70dc"/>
<rect x="895" y="680" width="33" height="28" fill="#dc7093"/>
<rect x="929" y="680" width="33" height="28" fill="#a52a2a"/>
<rect x="963" y="680" width="33" height="28" fill="#8e2323"/>
<rect x="997" y="680" width="33" height="28" fill="#8e6b23"/>
<rect x="1031" y="680" width="33" height="28" fill="#6b8e23"/>
<rect x="1065" y="680" width="33" height="28" fill="#238e23"/>
<rect x="1099" y="680" width="33" height="28" fill="#238e6b"/>
<rect x="1133" y="680" width="33" height="28" fill="#236b8e"/>
<rect x="691" y="709" width="33" height="28" fill="#23238e"/>
<rect x="725" y="709" width="33" height="28" fill="#6b238e"/>
<rect x="759" y="709" width="33" height="28" fill="#8e236b"/>
<rect x="793" y="709" width="33" height="28" fill="#cd3232"/>
<rect x="827" y="709" width="33" height="28" fill="#cd7f32"/>
<rect x="861" y="709" width="33" height="28" fill="#9acd32"/>
<rect x="895" y="709" width="33" height="28" fill="#32cd32"/>
<rect x="929" y="709" width="33" height="28" fill="#32cd9a"/>
<rect x="963" y="709" width="33" height="28" fill="#329acd"/>
<rect x="997" y="709" width="33" height="28" fill="#3232cd"/>
<rect x="1031" y="709" width="33" height="28" fill="#9a32cd"/>
<rect x="1065" y="709" width="33" height="28" fill="#cd329a"/>
<rect x="1099" y="709" width="33" height="28" fill="#ff0000"/>
<rect x="1133" y="709" width="33" height="28" fill="#ff7f00"/>
<rect x="691" y="738" width="33" height="29" fill="#ffff00"/>
<rect x="725" y="738" width="33" height="29" fill="#7fff00"/>
<rect x="759" y="738" width="33" height="29" fill="#00ff00"/>
<rect x="793" y="738" width="33" height="29" fill="#00ff7f"/>
<rect x="827" y="738" width="33" height="29" fill="#00ffff"/>
<rect x="861" y="738" width="33" height="29" fill="#007fff"/>
<rect x="895" y="738" width="33" height="29" fill="#0000ff"/>
<rect x="929" y="738" width="33" height="29" fill="#7f00ff"/>
<rect x="963" y="738" width="33" height="29" fill="#ff00ff"/>
<rect x="997" y="738" width="33" height="29" fill="#ff007f"/>
<rect x="1031" y="738" width="33" height="29" fill="#ffffff"/>
<rect x="690" y="621" width="35" height="30" fill="#fff"/><rect x="693" y="624" width="29" height="24" fill="#000"/>
</svg>
<svg style="left:1039px;top:744px" width="17" height="17" viewBox="0 0 17 17"><rect x=".5" y=".5" width="15" height="15" fill="#fff" stroke="#555"/><rect x="2.500" y="2.500" width="4" height="4" fill="none" stroke="#000"/><rect x="2.500" y="8.500" width="4" height="4" fill="none" stroke="#000"/><path d="M8 4.500h5M8 10.500h5" stroke="#000"/><path d="M15 11v4h-4z" fill="#e0c000" stroke="#000" stroke-width=".5"/></svg>
<div class="cl" style="right:957px;top:774px">Red</div>
<div class="cin" style="left:727px;top:770px"></div>
<div class="cl" style="left:732px;top:773px">0</div>
<div class="csp" style="left:764px;top:771px"></div><div class="csp" style="left:772px;top:771px"></div>
<div class="abs" style="left:766px;top:778px;width:0;height:0;border-top:2.500px solid transparent;border-bottom:2.500px solid transparent;border-right:3px solid #fff"></div>
<div class="abs" style="left:775px;top:778px;width:0;height:0;border-top:2.500px solid transparent;border-bottom:2.500px solid transparent;border-left:3px solid #fff"></div>
<div class="cth" style="left:784px;top:770px"></div>
<div class="cbar" style="left:791px;top:773px;width:132px;background:linear-gradient(90deg,#000,#ff0000)"></div>
<div class="cl" style="right:957px;top:799px">Green</div>
<div class="cin" style="left:727px;top:795px"></div>
<div class="cl" style="left:732px;top:798px">0</div>
<div class="csp" style="left:764px;top:796px"></div><div class="csp" style="left:772px;top:796px"></div>
<div class="abs" style="left:766px;top:803px;width:0;height:0;border-top:2.500px solid transparent;border-bottom:2.500px solid transparent;border-right:3px solid #fff"></div>
<div class="abs" style="left:775px;top:803px;width:0;height:0;border-top:2.500px solid transparent;border-bottom:2.500px solid transparent;border-left:3px solid #fff"></div>
<div class="cth" style="left:784px;top:795px"></div>
<div class="cbar" style="left:791px;top:798px;width:132px;background:linear-gradient(90deg,#000,#00ff00)"></div>
<div class="cl" style="right:957px;top:823px">Blue</div>
<div class="cin" style="left:727px;top:819px"></div>
<div class="cl" style="left:732px;top:822px">0</div>
<div class="csp" style="left:764px;top:820px"></div><div class="csp" style="left:772px;top:820px"></div>
<div class="abs" style="left:766px;top:827px;width:0;height:0;border-top:2.500px solid transparent;border-bottom:2.500px solid transparent;border-right:3px solid #fff"></div>
<div class="abs" style="left:775px;top:827px;width:0;height:0;border-top:2.500px solid transparent;border-bottom:2.500px solid transparent;border-left:3px solid #fff"></div>
<div class="cth" style="left:784px;top:819px"></div>
<div class="cbar" style="left:791px;top:822px;width:132px;background:linear-gradient(90deg,#000,#0000ff)"></div>
<div class="cl" style="right:717px;top:774px">Hue</div>
<div class="cin" style="left:967px;top:770px"></div>
<div class="cl" style="left:972px;top:773px">0</div>
<div class="csp" style="left:1004px;top:771px"></div><div class="csp" style="left:1012px;top:771px"></div>
<div class="abs" style="left:1006px;top:778px;width:0;height:0;border-top:2.500px solid transparent;border-bottom:2.500px solid transparent;border-right:3px solid #fff"></div>
<div class="abs" style="left:1015px;top:778px;width:0;height:0;border-top:2.500px solid transparent;border-bottom:2.500px solid transparent;border-left:3px solid #fff"></div>
<div class="cth" style="left:1024px;top:770px"></div>
<div class="cbar" style="left:1031px;top:773px;width:132px;background:#000"></div>
<div class="cl" style="right:717px;top:799px">Sat</div>
<div class="cin" style="left:967px;top:795px"></div>
<div class="cl" style="left:972px;top:798px">0</div>
<div class="csp" style="left:1004px;top:796px"></div><div class="csp" style="left:1012px;top:796px"></div>
<div class="abs" style="left:1006px;top:803px;width:0;height:0;border-top:2.500px solid transparent;border-bottom:2.500px solid transparent;border-right:3px solid #fff"></div>
<div class="abs" style="left:1015px;top:803px;width:0;height:0;border-top:2.500px solid transparent;border-bottom:2.500px solid transparent;border-left:3px solid #fff"></div>
<div class="cth" style="left:1024px;top:795px"></div>
<div class="cbar" style="left:1031px;top:798px;width:132px;background:#000"></div>
<div class="cl" style="right:717px;top:823px">Value</div>
<div class="cin" style="left:967px;top:819px"></div>
<div class="cl" style="left:972px;top:822px">0</div>
<div class="csp" style="left:1004px;top:820px"></div><div class="csp" style="left:1012px;top:820px"></div>
<div class="abs" style="left:1006px;top:827px;width:0;height:0;border-top:2.500px solid transparent;border-bottom:2.500px solid transparent;border-right:3px solid #fff"></div>
<div class="abs" style="left:1015px;top:827px;width:0;height:0;border-top:2.500px solid transparent;border-bottom:2.500px solid transparent;border-left:3px solid #fff"></div>
<div class="cth" style="left:1024px;top:819px"></div>
<div class="cbar" style="left:1031px;top:822px;width:132px;background:linear-gradient(90deg,#000,#fff)"></div>
<div class="abs" style="left:691px;top:850px;width:472px;height:2px;background:#d0d0d0;border-top:1px solid #4a4a4a"></div>
<div class="cl" style="left:700px;top:860px">Color:</div>
<div class="cl" style="left:763px;top:860px">Black</div>
<div class="cl" style="left:938.500px;top:883px;transform:translateX(-50%)">Old</div>
<div class="cl" style="left:981px;top:883px;transform:translateX(-50%)">New</div>
<div class="abs" style="left:917px;top:900px;width:88px;height:41px;background:#000"></div>
<div class="cbtn" style="left:1013px;top:889px;width:67px;color:#b4b4b4">Add</div>
<div class="cbtn" style="left:1013px;top:917px;width:67px;color:#b4b4b4">Reset</div>
<div class="cbtn" style="left:1089px;top:889px;width:77px;color:#fff">OK</div>
<div class="cbtn" style="left:1089px;top:917px;width:77px;color:#fff">Cancel</div>
</body>
</html>
